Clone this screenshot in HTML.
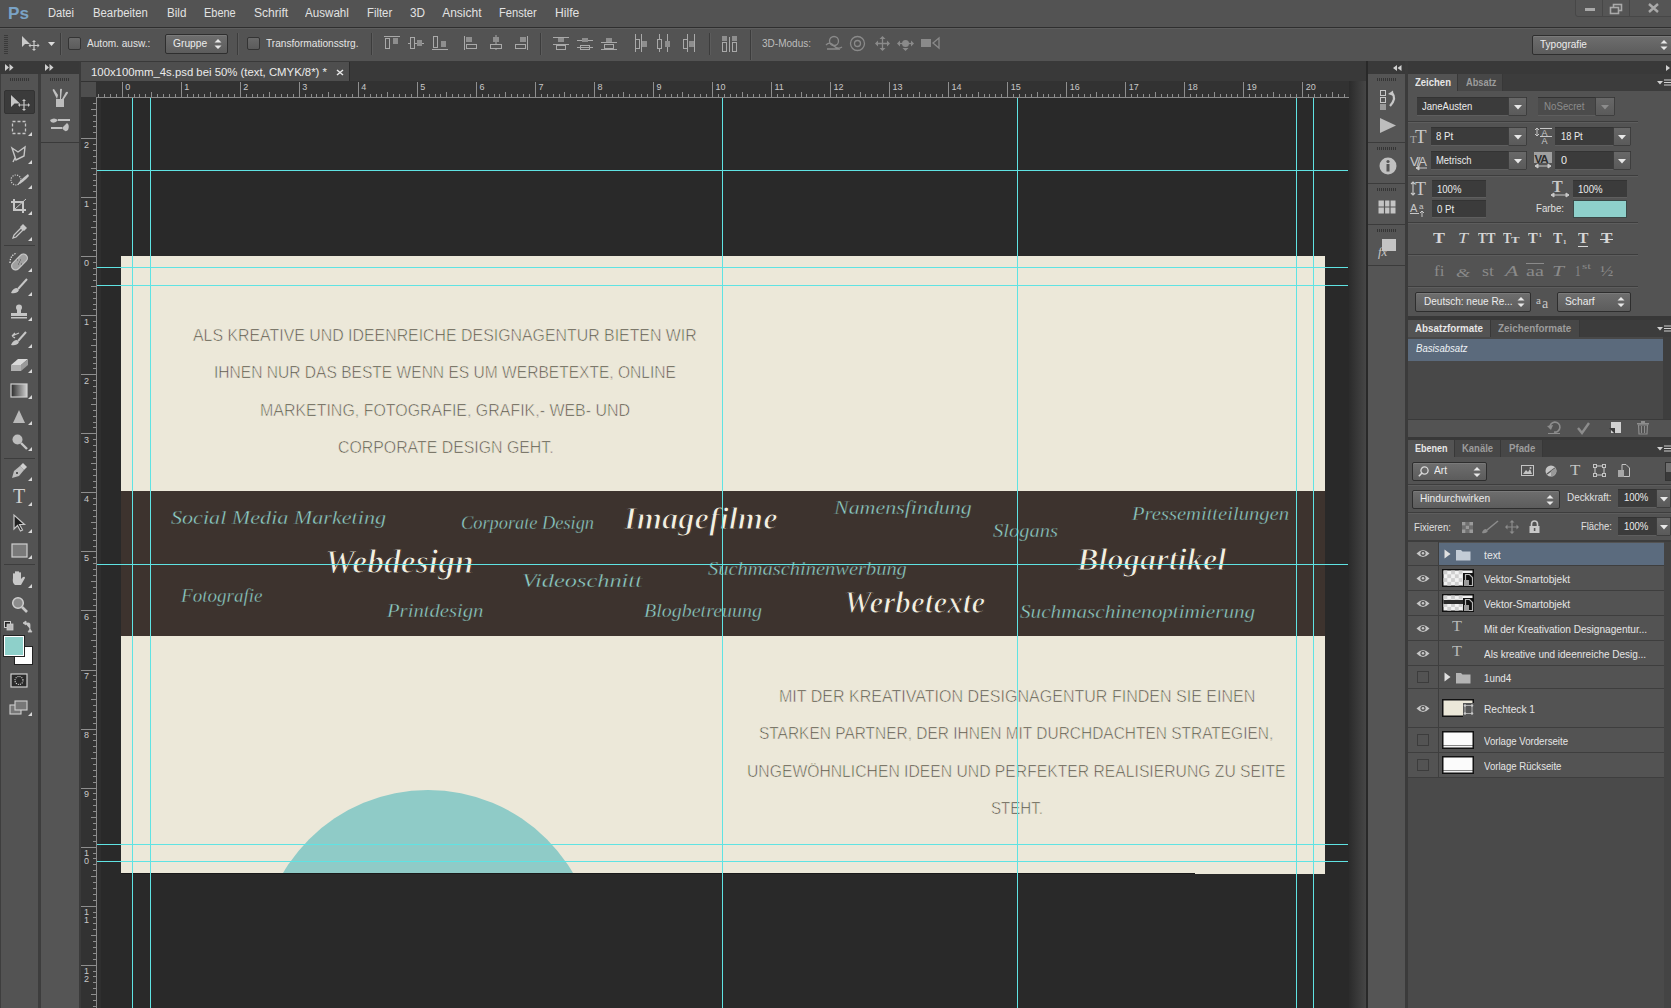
<!DOCTYPE html>
<html><head><meta charset="utf-8"><style>
*{margin:0;padding:0;box-sizing:border-box}
html,body{width:1671px;height:1008px;overflow:hidden;background:#535353;font-family:"Liberation Sans",sans-serif;color:#e0e0e0;position:relative}
.a{position:absolute}
.t{position:absolute;white-space:nowrap}
svg{overflow:visible}
</style></head><body>
<div class="a" style="left:0;top:0;width:1671px;height:27px;background:#535353"></div>
<div class="a" style="left:0;top:27px;width:1671px;height:1px;background:#2f2f2f"></div>
<div class="a" style="left:0;top:28px;width:1671px;height:1px;background:#5e5e5e"></div>
<div class="t" style="left:7.50px;top:4.81px;font:normal bold 17px/17px 'Liberation Sans',sans-serif;color:#7aa3c6;transform:scaleX(1.0096);transform-origin:0 0;">Ps</div>
<div class="t" style="left:47.60px;top:7.04px;font:normal normal 12px/12px 'Liberation Sans',sans-serif;color:#e2e2e2;transform:scaleX(0.9286);transform-origin:0 0;">Datei</div>
<div class="t" style="left:92.50px;top:7.04px;font:normal normal 12px/12px 'Liberation Sans',sans-serif;color:#e2e2e2;transform:scaleX(0.9431);transform-origin:0 0;">Bearbeiten</div>
<div class="t" style="left:167.30px;top:7.04px;font:normal normal 12px/12px 'Liberation Sans',sans-serif;color:#e2e2e2;transform:scaleX(0.9700);transform-origin:0 0;">Bild</div>
<div class="t" style="left:204.30px;top:7.04px;font:normal normal 12px/12px 'Liberation Sans',sans-serif;color:#e2e2e2;transform:scaleX(0.9135);transform-origin:0 0;">Ebene</div>
<div class="t" style="left:254.00px;top:7.04px;font:normal normal 12px/12px 'Liberation Sans',sans-serif;color:#e2e2e2;transform:scaleX(1.0059);transform-origin:0 0;">Schrift</div>
<div class="t" style="left:305.30px;top:7.04px;font:normal normal 12px/12px 'Liberation Sans',sans-serif;color:#e2e2e2;transform:scaleX(0.9670);transform-origin:0 0;">Auswahl</div>
<div class="t" style="left:367.30px;top:7.04px;font:normal normal 12px/12px 'Liberation Sans',sans-serif;color:#e2e2e2;transform:scaleX(0.9438);transform-origin:0 0;">Filter</div>
<div class="t" style="left:410.00px;top:7.04px;font:normal normal 12px/12px 'Liberation Sans',sans-serif;color:#e2e2e2;transform:scaleX(0.9804);transform-origin:0 0;">3D</div>
<div class="t" style="left:442.20px;top:7.04px;font:normal normal 12px/12px 'Liberation Sans',sans-serif;color:#e2e2e2;">Ansicht</div>
<div class="t" style="left:499.20px;top:7.04px;font:normal normal 12px/12px 'Liberation Sans',sans-serif;color:#e2e2e2;transform:scaleX(0.9287);transform-origin:0 0;">Fenster</div>
<div class="t" style="left:555.30px;top:7.04px;font:normal normal 12px/12px 'Liberation Sans',sans-serif;color:#e2e2e2;transform:scaleX(1.0125);transform-origin:0 0;">Hilfe</div>
<div class="a" style="left:1575px;top:-1px;width:97px;height:18px;border:1px solid #474747;border-radius:0 0 0 3px;background:#555"></div>
<div class="a" style="left:1602px;top:0;width:1px;height:17px;background:#474747"></div>
<div class="a" style="left:1629px;top:0;width:1px;height:17px;background:#474747"></div>
<svg class="a" style="left:1580px;top:0px;" width="90" height="17" viewBox="0 0 90 17"><rect x="5" y="8" width="10" height="3" fill="#a9a9a9"/><rect x="33.5" y="4.5" width="8" height="6" fill="none" stroke="#a9a9a9" stroke-width="1.6"/><rect x="30.5" y="7.5" width="8" height="6" fill="#555" stroke="#a9a9a9" stroke-width="1.6"/><path d="M69 4 L78 12 M78 4 L69 12" stroke="#a9a9a9" stroke-width="2.4"/></svg>
<svg class="a" style="left:4px;top:35px;" width="4" height="20" viewBox="0 0 4 20"><rect x="0" y="0" width="4" height="1" fill="#3a3a3a"/><rect x="0" y="2" width="4" height="1" fill="#3a3a3a"/><rect x="0" y="4" width="4" height="1" fill="#3a3a3a"/><rect x="0" y="6" width="4" height="1" fill="#3a3a3a"/><rect x="0" y="8" width="4" height="1" fill="#3a3a3a"/><rect x="0" y="10" width="4" height="1" fill="#3a3a3a"/><rect x="0" y="12" width="4" height="1" fill="#3a3a3a"/><rect x="0" y="14" width="4" height="1" fill="#3a3a3a"/><rect x="0" y="16" width="4" height="1" fill="#3a3a3a"/><rect x="0" y="18" width="4" height="1" fill="#3a3a3a"/></svg>
<svg class="a" style="left:20px;top:35px;" width="22" height="16" viewBox="0 0 22 16"><path d="M2 1 L2 12 L5 9 L10 9Z" fill="#c9c9c9"/><path d="M14 6 V15 M9.5 10.5 H18.5" stroke="#c9c9c9" stroke-width="1.2"/><path d="M14 5 l-2 2 h4z M14 16 l-2 -2 h4z M8.5 10.5 l2 -2 v4z M19.5 10.5 l-2 -2 v4z" fill="#c9c9c9"/></svg>
<svg class="a" style="left:48px;top:42px;" width="7" height="5" viewBox="0 0 7 5"><path d="M0 0 H7 L3.5 4Z" fill="#dcdcdc"/></svg>
<div class="a" style="left:60px;top:33px;width:1px;height:22px;background:#3c3c3c"></div><div class="a" style="left:61px;top:33px;width:1px;height:22px;background:#5c5c5c"></div>
<div class="a" style="left:68px;top:37px;width:13px;height:13px;border:1px solid #343434;border-radius:2px;background:linear-gradient(#6a6a6a,#5b5b5b)"></div>
<div class="t" style="left:86.70px;top:38.19px;font:normal normal 11px/11px 'Liberation Sans',sans-serif;color:#e4e4e4;transform:scaleX(0.9161);transform-origin:0 0;">Autom. ausw.:</div>
<div class="a" style="left:165px;top:34px;width:63px;height:20px;border:1px solid #2e2e2e;border-radius:2px;background:linear-gradient(#6e6e6e,#5c5c5c);box-shadow:inset 0 1px 0 #7a7a7a"></div>
<div class="t" style="left:173.00px;top:37.69px;font:normal normal 11px/11px 'Liberation Sans',sans-serif;color:#ececec;transform:scaleX(0.9319);transform-origin:0 0;">Gruppe</div>
<svg class="a" style="left:214px;top:38.0px;" width="8" height="12" viewBox="0 0 8 12"><path d="M0.5 4.5 L4 1 L7.5 4.5Z M0.5 7.5 L4 11 L7.5 7.5Z" fill="#e8e8e8"/></svg>
<div class="a" style="left:237px;top:33px;width:1px;height:22px;background:#3c3c3c"></div><div class="a" style="left:238px;top:33px;width:1px;height:22px;background:#5c5c5c"></div>
<div class="a" style="left:247px;top:37px;width:13px;height:13px;border:1px solid #343434;border-radius:2px;background:linear-gradient(#6a6a6a,#5b5b5b)"></div>
<div class="t" style="left:266.30px;top:38.19px;font:normal normal 11px/11px 'Liberation Sans',sans-serif;color:#e4e4e4;transform:scaleX(0.9204);transform-origin:0 0;">Transformationsstrg.</div>
<div class="a" style="left:371px;top:33px;width:1px;height:22px;background:#3c3c3c"></div><div class="a" style="left:372px;top:33px;width:1px;height:22px;background:#5c5c5c"></div>
<svg class="a" style="left:384px;top:36px;" width="16" height="14" viewBox="0 0 16 14"><path d="M0 0.5H16" stroke="#a9a9a9"/><rect x="1.5" y="2.5" width="4" height="10" fill="none" stroke="#a9a9a9"/><rect x="9" y="2" width="5" height="6" fill="#8e8e8e"/></svg>
<svg class="a" style="left:408px;top:36px;" width="16" height="14" viewBox="0 0 16 14"><path d="M0 7.5H16" stroke="#a9a9a9"/><rect x="2.5" y="1.5" width="4" height="11" fill="#555" stroke="#a9a9a9"/><rect x="9" y="4" width="5" height="6" fill="#8e8e8e"/></svg>
<svg class="a" style="left:432px;top:36px;" width="16" height="14" viewBox="0 0 16 14"><path d="M0 13.5H16" stroke="#a9a9a9"/><rect x="1.5" y="0.5" width="4" height="11" fill="none" stroke="#a9a9a9"/><rect x="9" y="5" width="5" height="6" fill="#8e8e8e"/></svg>
<svg class="a" style="left:464px;top:36px;" width="15" height="14" viewBox="0 0 15 14"><path d="M0.5 0V14" stroke="#a9a9a9"/><rect x="2" y="1" width="6" height="5" fill="#8e8e8e"/><rect x="2.5" y="8.5" width="10" height="4" fill="none" stroke="#a9a9a9"/></svg>
<svg class="a" style="left:489px;top:35px;" width="14" height="15" viewBox="0 0 14 15"><path d="M7 0V15" stroke="#a9a9a9"/><rect x="4" y="2" width="6" height="5" fill="#8e8e8e"/><rect x="1.5" y="9.5" width="11" height="4" fill="#555" stroke="#a9a9a9"/></svg>
<svg class="a" style="left:513px;top:36px;" width="15" height="14" viewBox="0 0 15 14"><path d="M14.5 0V14" stroke="#a9a9a9"/><rect x="7" y="1" width="6" height="5" fill="#8e8e8e"/><rect x="2.5" y="8.5" width="10" height="4" fill="none" stroke="#a9a9a9"/></svg>
<div class="a" style="left:540px;top:33px;width:1px;height:22px;background:#3c3c3c"></div><div class="a" style="left:541px;top:33px;width:1px;height:22px;background:#5c5c5c"></div>
<svg class="a" style="left:552px;top:36px;" width="18" height="14" viewBox="0 0 18 14"><path d="M1 1.5H17 M1 8.5H17" stroke="#a9a9a9"/><rect x="6" y="2" width="6" height="4" fill="#8e8e8e"/><rect x="4.5" y="9.5" width="9" height="4" fill="none" stroke="#a9a9a9"/></svg>
<svg class="a" style="left:576px;top:36px;" width="18" height="14" viewBox="0 0 18 14"><path d="M1 4.5H17 M1 11.5H17" stroke="#a9a9a9"/><rect x="6" y="2" width="6" height="4" fill="#8e8e8e"/><rect x="4.5" y="9.5" width="9" height="4" fill="none" stroke="#a9a9a9"/></svg>
<svg class="a" style="left:600px;top:36px;" width="18" height="14" viewBox="0 0 18 14"><path d="M1 6.5H17 M1 13.5H17" stroke="#a9a9a9"/><rect x="6" y="2" width="6" height="4" fill="#8e8e8e"/><rect x="4.5" y="8.5" width="9" height="4" fill="none" stroke="#a9a9a9"/></svg>
<svg class="a" style="left:634px;top:33px;" width="14" height="20" viewBox="0 0 14 20"><path d="M1.5 1V19 M7.5 1V19" stroke="#a9a9a9"/><rect x="1.5" y="6.5" width="4" height="9" fill="none" stroke="#a9a9a9"/><rect x="8" y="8" width="5" height="6" fill="#8e8e8e"/></svg>
<svg class="a" style="left:656px;top:33px;" width="15" height="20" viewBox="0 0 15 20"><path d="M3.5 1V19 M11.5 1V19" stroke="#a9a9a9"/><rect x="1.5" y="6.5" width="4" height="9" fill="#555" stroke="#a9a9a9"/><rect x="9" y="8" width="5" height="6" fill="#8e8e8e"/></svg>
<svg class="a" style="left:682px;top:33px;" width="14" height="20" viewBox="0 0 14 20"><path d="M5.5 1V19 M12.5 1V19" stroke="#a9a9a9"/><rect x="1.5" y="6.5" width="4" height="9" fill="none" stroke="#a9a9a9"/><rect x="7" y="8" width="5" height="6" fill="#8e8e8e"/></svg>
<div class="a" style="left:709px;top:33px;width:1px;height:22px;background:#3c3c3c"></div><div class="a" style="left:710px;top:33px;width:1px;height:22px;background:#5c5c5c"></div>
<svg class="a" style="left:721px;top:35px;" width="17" height="18" viewBox="0 0 17 18"><rect x="1" y="1" width="5" height="5" fill="#8e8e8e"/><rect x="11" y="1" width="5" height="5" fill="#8e8e8e"/><rect x="1.5" y="7.5" width="4" height="9" fill="none" stroke="#a9a9a9"/><rect x="11.5" y="7.5" width="4" height="9" fill="none" stroke="#a9a9a9"/><path d="M8.5 2V17" stroke="#a9a9a9"/></svg>
<div class="a" style="left:750px;top:30px;width:1px;height:30px;background:#3c3c3c"></div><div class="a" style="left:751px;top:30px;width:1px;height:30px;background:#5c5c5c"></div>
<div class="t" style="left:761.80px;top:38.19px;font:normal normal 11px/11px 'Liberation Sans',sans-serif;color:#bdbdbd;transform:scaleX(0.9108);transform-origin:0 0;">3D-Modus:</div>
<svg class="a" style="left:824px;top:35px;" width="19" height="17" viewBox="0 0 19 17"><circle cx="10" cy="6" r="4.5" fill="none" stroke="#8a8a8a" stroke-width="1.3"/><path d="M2 10 Q6 6 10 11 Q14 15 18 12 M3 14 H16" fill="none" stroke="#8a8a8a" stroke-width="1.3"/></svg>
<svg class="a" style="left:849px;top:35px;" width="17" height="17" viewBox="0 0 17 17"><circle cx="8.5" cy="8.5" r="7" fill="none" stroke="#8a8a8a" stroke-width="1.3"/><circle cx="8.5" cy="8.5" r="3" fill="none" stroke="#8a8a8a" stroke-width="1.3"/></svg>
<svg class="a" style="left:874px;top:35px;" width="17" height="17" viewBox="0 0 17 17"><path d="M8.5 1 L5.5 4 H11.5Z M8.5 16 L5.5 13 H11.5Z M1 8.5 L4 5.5 V11.5Z M16 8.5 L13 5.5 V11.5Z" fill="#8a8a8a"/><path d="M8.5 3V14 M3 8.5H14" stroke="#8a8a8a" stroke-width="1.3"/></svg>
<svg class="a" style="left:896px;top:35px;" width="19" height="17" viewBox="0 0 19 17"><circle cx="9.5" cy="8.5" r="3.5" fill="#8a8a8a"/><path d="M1 8.5 L4 5.5 V11.5Z M18 8.5 L15 5.5 V11.5Z M9.5 16 L6.5 13 H12.5Z" fill="#8a8a8a"/><path d="M3 8.5H16" stroke="#8a8a8a" stroke-width="1.3"/></svg>
<svg class="a" style="left:920px;top:37px;" width="21" height="12" viewBox="0 0 21 12"><rect x="1" y="2" width="10" height="8" fill="#8a8a8a"/><path d="M19 1 L13 6 L19 11Z" fill="none" stroke="#8a8a8a" stroke-width="1.3"/></svg>
<div class="a" style="left:1532px;top:35px;width:142px;height:20px;border:1px solid #2e2e2e;border-radius:2px;background:linear-gradient(#6e6e6e,#5c5c5c);box-shadow:inset 0 1px 0 #7a7a7a"></div>
<div class="t" style="left:1540.00px;top:38.69px;font:normal normal 11px/11px 'Liberation Sans',sans-serif;color:#ececec;transform:scaleX(0.9144);transform-origin:0 0;">Typografie</div>
<svg class="a" style="left:1660px;top:39.0px;" width="8" height="12" viewBox="0 0 8 12"><path d="M0.5 4.5 L4 1 L7.5 4.5Z M0.5 7.5 L4 11 L7.5 7.5Z" fill="#e8e8e8"/></svg>
<div class="a" style="left:0;top:61px;width:81px;height:13px;background:#393939"></div>
<svg class="a" style="left:5px;top:64px;" width="9" height="7" viewBox="0 0 9 7"><path d="M0 0 L4 3.5 L0 7Z M4.5 0 L8.5 3.5 L4.5 7Z" fill="#d0d0d0"/></svg>
<svg class="a" style="left:45px;top:64px;" width="9" height="7" viewBox="0 0 9 7"><path d="M0 0 L4 3.5 L0 7Z M4.5 0 L8.5 3.5 L4.5 7Z" fill="#d0d0d0"/></svg>
<div class="a" style="left:0;top:74px;width:1px;height:934px;background:#3e3e3e"></div>
<div class="a" style="left:1px;top:74px;width:37px;height:934px;background:#535353"></div>
<div class="a" style="left:38px;top:74px;width:3px;height:934px;background:#3d3d3d"></div>
<div class="a" style="left:41px;top:74px;width:38px;height:934px;background:#555555"></div>
<div class="a" style="left:41px;top:142px;width:38px;height:1px;background:#3a3a3a"></div>
<div class="a" style="left:79px;top:61px;width:2px;height:947px;background:#3a3a3a"></div>
<svg class="a" style="left:10px;top:78px;" width="20" height="3" viewBox="0 0 20 3"><rect x="0" y="0" width="1" height="3" fill="#353535"/><rect x="2" y="0" width="1" height="3" fill="#353535"/><rect x="4" y="0" width="1" height="3" fill="#353535"/><rect x="6" y="0" width="1" height="3" fill="#353535"/><rect x="8" y="0" width="1" height="3" fill="#353535"/><rect x="10" y="0" width="1" height="3" fill="#353535"/><rect x="12" y="0" width="1" height="3" fill="#353535"/><rect x="14" y="0" width="1" height="3" fill="#353535"/><rect x="16" y="0" width="1" height="3" fill="#353535"/><rect x="18" y="0" width="1" height="3" fill="#353535"/></svg>
<svg class="a" style="left:50px;top:78px;" width="20" height="3" viewBox="0 0 20 3"><rect x="0" y="0" width="1" height="3" fill="#353535"/><rect x="2" y="0" width="1" height="3" fill="#353535"/><rect x="4" y="0" width="1" height="3" fill="#353535"/><rect x="6" y="0" width="1" height="3" fill="#353535"/><rect x="8" y="0" width="1" height="3" fill="#353535"/><rect x="10" y="0" width="1" height="3" fill="#353535"/><rect x="12" y="0" width="1" height="3" fill="#353535"/><rect x="14" y="0" width="1" height="3" fill="#353535"/><rect x="16" y="0" width="1" height="3" fill="#353535"/><rect x="18" y="0" width="1" height="3" fill="#353535"/></svg>
<div class="a" style="left:4px;top:90px;width:31px;height:24px;background:#3b3b3b;border:1px solid #333;border-radius:2px"></div>
<svg class="a" style="left:10px;top:94px;" width="22" height="16" viewBox="0 0 22 16"><path d="M1 1 L1 13 L4.5 9.5 L10 9.5Z" fill="#c6c6c6"/><path d="M14 6 V16 M9 11 H19" stroke="#c6c6c6" stroke-width="1.2"/><path d="M14 5 l-2 2 h4z M14 17 l-2 -2 h4z M8 11 l2 -2 v4z M20 11 l-2 -2 v4z" fill="#c6c6c6"/></svg>
<svg class="a" style="left:11px;top:120px;" width="16" height="15" viewBox="0 0 16 15"><rect x="1.5" y="1.5" width="13" height="12" fill="none" stroke="#c6c6c6" stroke-width="1.3" stroke-dasharray="3 2"/></svg>
<svg class="a" style="left:28px;top:132px;" width="4" height="4" viewBox="0 0 4 4"><path d="M4 0 V4 H0Z" fill="#d8d8d8"/></svg>
<svg class="a" style="left:10px;top:145px;" width="18" height="18" viewBox="0 0 18 18"><path d="M2 3 L8 7 L15 2 L14 11 L6 15 L2 3Z M5 13 L3 17" fill="none" stroke="#c6c6c6" stroke-width="1.4"/></svg>
<svg class="a" style="left:28px;top:160px;" width="4" height="4" viewBox="0 0 4 4"><path d="M4 0 V4 H0Z" fill="#d8d8d8"/></svg>
<svg class="a" style="left:10px;top:172px;" width="20" height="16" viewBox="0 0 20 16"><circle cx="6" cy="8" r="5" fill="none" stroke="#c6c6c6" stroke-width="1.2" stroke-dasharray="1.2 1.2"/><path d="M7 13 Q10 8 18 2 L19 4 Q13 11 7 13Z" fill="#c6c6c6"/></svg>
<svg class="a" style="left:28px;top:185px;" width="4" height="4" viewBox="0 0 4 4"><path d="M4 0 V4 H0Z" fill="#d8d8d8"/></svg>
<svg class="a" style="left:10px;top:198px;" width="18" height="16" viewBox="0 0 18 16"><path d="M4 1 V12 H16 M1 4 H13 V15" fill="none" stroke="#c6c6c6" stroke-width="2"/><path d="M5 11 L16 1" stroke="#c6c6c6" stroke-width="1"/></svg>
<svg class="a" style="left:28px;top:211px;" width="4" height="4" viewBox="0 0 4 4"><path d="M4 0 V4 H0Z" fill="#d8d8d8"/></svg>
<svg class="a" style="left:11px;top:223px;" width="17" height="17" viewBox="0 0 17 17"><path d="M2 15 L3 12 L10 5 L12 7 L5 14Z" fill="none" stroke="#c6c6c6" stroke-width="1.3"/><path d="M9 4 L13 8 L16 5 L12 1Z" fill="#c6c6c6"/></svg>
<svg class="a" style="left:28px;top:237px;" width="4" height="4" viewBox="0 0 4 4"><path d="M4 0 V4 H0Z" fill="#d8d8d8"/></svg>
<div class="a" style="left:4px;top:245px;width:31px;height:1px;background:#3d3d3d"></div>
<svg class="a" style="left:8px;top:252px;" width="21" height="19" viewBox="0 0 21 19"><rect x="2" y="6" width="19" height="8" rx="4" transform="rotate(-45 11.5 10)" fill="#a0a0a0" stroke="#c6c6c6" stroke-width="1.2"/><path d="M9 8h1M11 10h1M13 12h1M12 8h1M10 12h1" stroke="#555" stroke-width="1"/><path d="M2 11 Q2 3 9 1" fill="none" stroke="#e0e0e0" stroke-width="1.3" stroke-dasharray="1.3 1.3"/></svg>
<svg class="a" style="left:28px;top:268px;" width="4" height="4" viewBox="0 0 4 4"><path d="M4 0 V4 H0Z" fill="#d8d8d8"/></svg>
<svg class="a" style="left:9px;top:278px;" width="20" height="17" viewBox="0 0 20 17"><path d="M2 15 Q4 10 8 10 L10 12 Q8 16 2 15Z" fill="#c6c6c6"/><path d="M9 11 L18 1" stroke="#c6c6c6" stroke-width="2"/></svg>
<svg class="a" style="left:28px;top:292px;" width="4" height="4" viewBox="0 0 4 4"><path d="M4 0 V4 H0Z" fill="#d8d8d8"/></svg>
<svg class="a" style="left:10px;top:304px;" width="18" height="16" viewBox="0 0 18 16"><circle cx="9" cy="3.5" r="3" fill="#c6c6c6"/><rect x="7" y="5" width="4" height="4" fill="#c6c6c6"/><rect x="1" y="9" width="16" height="3" fill="#c6c6c6"/><rect x="1" y="13" width="16" height="1.5" fill="#c6c6c6"/></svg>
<svg class="a" style="left:28px;top:317px;" width="4" height="4" viewBox="0 0 4 4"><path d="M4 0 V4 H0Z" fill="#d8d8d8"/></svg>
<svg class="a" style="left:9px;top:330px;" width="20" height="17" viewBox="0 0 20 17"><path d="M2 15 Q4 10 8 10 L10 12 Q8 16 2 15Z" fill="#c6c6c6"/><path d="M9 11 L17 2" stroke="#c6c6c6" stroke-width="2"/><path d="M3 6 L10 3 M3 6 L6 3 M3 6 L6 8" stroke="#c6c6c6" stroke-width="1.3" fill="none"/></svg>
<svg class="a" style="left:28px;top:344px;" width="4" height="4" viewBox="0 0 4 4"><path d="M4 0 V4 H0Z" fill="#d8d8d8"/></svg>
<svg class="a" style="left:10px;top:357px;" width="19" height="15" viewBox="0 0 19 15"><path d="M1 8 L8 2 H18 L11 8Z" fill="#dadada"/><path d="M1 8 H11 V14 H1Z" fill="#b0b0b0"/><path d="M11 8 L18 2 V8 L11 14Z" fill="#9a9a9a"/></svg>
<svg class="a" style="left:28px;top:369px;" width="4" height="4" viewBox="0 0 4 4"><path d="M4 0 V4 H0Z" fill="#d8d8d8"/></svg>
<svg class="a" style="left:10px;top:383px;" width="18" height="15" viewBox="0 0 18 15"><defs><linearGradient id="gg" x1="0" x2="1"><stop offset="0" stop-color="#2a2a2a"/><stop offset="1" stop-color="#d0d0d0"/></linearGradient></defs><rect x="1" y="1" width="16" height="13" fill="url(#gg)" stroke="#cfcfcf" stroke-width="1.2"/></svg>
<svg class="a" style="left:28px;top:395px;" width="4" height="4" viewBox="0 0 4 4"><path d="M4 0 V4 H0Z" fill="#d8d8d8"/></svg>
<svg class="a" style="left:12px;top:409px;" width="14" height="15" viewBox="0 0 14 15"><path d="M7 1 L13 14 H1Z" fill="#b9b9b9"/></svg>
<svg class="a" style="left:28px;top:421px;" width="4" height="4" viewBox="0 0 4 4"><path d="M4 0 V4 H0Z" fill="#d8d8d8"/></svg>
<svg class="a" style="left:11px;top:433px;" width="17" height="17" viewBox="0 0 17 17"><circle cx="6.5" cy="6.5" r="5" fill="#bdbdbd"/><path d="M10 10 L16 16" stroke="#c6c6c6" stroke-width="2.4"/></svg>
<svg class="a" style="left:28px;top:447px;" width="4" height="4" viewBox="0 0 4 4"><path d="M4 0 V4 H0Z" fill="#d8d8d8"/></svg>
<div class="a" style="left:4px;top:458px;width:31px;height:1px;background:#3d3d3d"></div>
<svg class="a" style="left:10px;top:462px;" width="18" height="18" viewBox="0 0 18 18"><path d="M2 16 L4 9 L10 4 L14 8 L9 14Z" fill="#bdbdbd"/><path d="M10 4 L13 1 L17 5 L14 8" fill="#cfcfcf"/><circle cx="7" cy="11" r="1" fill="#333"/></svg>
<svg class="a" style="left:28px;top:477px;" width="4" height="4" viewBox="0 0 4 4"><path d="M4 0 V4 H0Z" fill="#d8d8d8"/></svg>
<svg class="a" style="left:11px;top:488px;" width="16" height="17" viewBox="0 0 16 17"><text x="8" y="15" font-family="Liberation Serif" font-size="20" text-anchor="middle" fill="#cfcfcf">T</text></svg>
<svg class="a" style="left:28px;top:502px;" width="4" height="4" viewBox="0 0 4 4"><path d="M4 0 V4 H0Z" fill="#d8d8d8"/></svg>
<svg class="a" style="left:13px;top:514px;" width="14" height="18" viewBox="0 0 14 18"><path d="M1 1 L1 15 L4.5 11.5 L7.5 17 L9.5 16 L6.5 10.5 L11.5 10.5Z" fill="#1f1f1f" stroke="#c6c6c6" stroke-width="1.2"/></svg>
<svg class="a" style="left:28px;top:529px;" width="4" height="4" viewBox="0 0 4 4"><path d="M4 0 V4 H0Z" fill="#d8d8d8"/></svg>
<svg class="a" style="left:11px;top:543px;" width="17" height="15" viewBox="0 0 17 15"><rect x="1" y="1" width="15" height="13" fill="#7a7a7a" stroke="#cfcfcf" stroke-width="1.2"/></svg>
<svg class="a" style="left:28px;top:555px;" width="4" height="4" viewBox="0 0 4 4"><path d="M4 0 V4 H0Z" fill="#d8d8d8"/></svg>
<div class="a" style="left:4px;top:564px;width:31px;height:1px;background:#3d3d3d"></div>
<svg class="a" style="left:10px;top:570px;" width="19" height="17" viewBox="0 0 19 17"><path d="M3 8 V4 Q4 2 5 4 V8 V2 Q6 0 7 2 V8 V2 Q8 0 9 2 V8 V3 Q10 1 11 3 V9 L13 7 Q15 6 15 8 L11 15 H5 Q2 13 3 8Z" fill="#c8c8c8"/></svg>
<svg class="a" style="left:28px;top:584px;" width="4" height="4" viewBox="0 0 4 4"><path d="M4 0 V4 H0Z" fill="#d8d8d8"/></svg>
<svg class="a" style="left:11px;top:596px;" width="18" height="17" viewBox="0 0 18 17"><circle cx="7" cy="7" r="5.3" fill="#8c8c8c" stroke="#cfcfcf" stroke-width="1.5"/><path d="M11 11 L16 16" stroke="#c6c6c6" stroke-width="2.6"/></svg>
<svg class="a" style="left:3px;top:620px;" width="30" height="12" viewBox="0 0 30 12"><rect x="1.5" y="1.5" width="6" height="6" fill="#222" stroke="#ccc"/><rect x="4" y="4" width="6" height="6" fill="#bbb" stroke="#ccc" stroke-width="0.8"/><path d="M20 3 L23 1 V5Z M27 9 L25 12 H29Z M22 3 H26 Q27 3 27 5 V9" fill="#c8c8c8" stroke="#c8c8c8" stroke-width="0.8"/></svg>
<div class="a" style="left:14px;top:646px;width:19px;height:19px;background:#fff;border:1px solid #222"></div>
<div class="a" style="left:4px;top:636px;width:20px;height:20px;background:#8ed0ca;border:1px solid #fff;outline:1px solid #222"></div>
<svg class="a" style="left:10px;top:673px;" width="18" height="15" viewBox="0 0 18 15"><rect x="1" y="1" width="16" height="13" fill="#2a2a2a" stroke="#cfcfcf" stroke-width="1.2"/><circle cx="9" cy="7.5" r="4" fill="none" stroke="#ddd" stroke-width="1.1" stroke-dasharray="1 1.1"/></svg>
<svg class="a" style="left:9px;top:700px;" width="19" height="15" viewBox="0 0 19 15"><rect x="1" y="5" width="11" height="9" fill="#777" stroke="#cfcfcf" stroke-width="1.1"/><rect x="6" y="1" width="12" height="9" fill="#777" stroke="#cfcfcf" stroke-width="1.1"/></svg>
<svg class="a" style="left:28px;top:712px;" width="4" height="4" viewBox="0 0 4 4"><path d="M4 0 V4 H0Z" fill="#d8d8d8"/></svg>
<svg class="a" style="left:50px;top:88px;" width="20" height="20" viewBox="0 0 20 20"><rect x="6" y="11" width="8" height="8" fill="#bdbdbd"/><path d="M7 11 L3 3 Q2 1 4 1 L8 7Z M10 11 V2 Q10 0 12 1 L11 11Z M12 11 L16 4 Q18 3 18 5 L14 11Z" fill="#c0c0c0"/></svg>
<svg class="a" style="left:49px;top:116px;" width="22" height="18" viewBox="0 0 22 18"><path d="M1 4 Q5 1 9 4 Q6 8 2 6Z" fill="#c0c0c0"/><rect x="9" y="3" width="12" height="2" fill="#c0c0c0"/><rect x="2" y="11" width="11" height="2" fill="#c0c0c0"/><path d="M13 12 L18 7 Q21 9 19 14 Q16 17 13 12Z" fill="#c0c0c0"/></svg>
<div class="a" style="left:81px;top:61px;width:1285px;height:20px;background:#393939"></div>
<div class="a" style="left:81px;top:62px;width:269px;height:19px;background:#4e4e4e;border-right:1px solid #2c2c2c"></div>
<div class="t" style="left:90.50px;top:67.27px;font:normal normal 11.5px/11.5px 'Liberation Sans',sans-serif;color:#ebebeb;transform:scaleX(0.9870);transform-origin:0 0;">100x100mm_4s.psd bei 50% (text, CMYK/8*) *</div>
<svg class="a" style="left:336px;top:69px;" width="8" height="7" viewBox="0 0 8 7"><path d="M1 1 L7 6 M7 1 L1 6" stroke="#e8e8e8" stroke-width="1.5"/></svg>
<div class="a" style="left:81px;top:81px;width:1270px;height:16px;background:#323232"></div>
<div class="a" style="left:81px;top:82px;width:15px;height:15px;background:#4e4e4e"></div>
<svg class="a" style="left:81px;top:81px;" width="1270" height="16" viewBox="0 0 1270 16"><path d="M17.5 13V17 M23.5 13V17 M29.5 13V17 M35.5 13V17 M41.5 1V17 M47.5 13V17 M53.5 13V17 M58.5 13V17 M64.5 13V17 M70.5 11V17 M76.5 13V17 M82.5 13V17 M88.5 13V17 M94.5 13V17 M100.5 1V17 M106.5 13V17 M112.5 13V17 M117.5 13V17 M123.5 13V17 M129.5 11V17 M135.5 13V17 M141.5 13V17 M147.5 13V17 M153.5 13V17 M159.5 1V17 M165.5 13V17 M171.5 13V17 M176.5 13V17 M182.5 13V17 M188.5 11V17 M194.5 13V17 M200.5 13V17 M206.5 13V17 M212.5 13V17 M218.5 1V17 M224.5 13V17 M230.5 13V17 M235.5 13V17 M241.5 13V17 M247.5 11V17 M253.5 13V17 M259.5 13V17 M265.5 13V17 M271.5 13V17 M277.5 1V17 M283.5 13V17 M289.5 13V17 M295.5 13V17 M300.5 13V17 M306.5 11V17 M312.5 13V17 M318.5 13V17 M324.5 13V17 M330.5 13V17 M336.5 1V17 M342.5 13V17 M348.5 13V17 M354.5 13V17 M359.5 13V17 M365.5 11V17 M371.5 13V17 M377.5 13V17 M383.5 13V17 M389.5 13V17 M395.5 1V17 M401.5 13V17 M407.5 13V17 M413.5 13V17 M418.5 13V17 M424.5 11V17 M430.5 13V17 M436.5 13V17 M442.5 13V17 M448.5 13V17 M454.5 1V17 M460.5 13V17 M466.5 13V17 M472.5 13V17 M478.5 13V17 M483.5 11V17 M489.5 13V17 M495.5 13V17 M501.5 13V17 M507.5 13V17 M513.5 1V17 M519.5 13V17 M525.5 13V17 M531.5 13V17 M537.5 13V17 M542.5 11V17 M548.5 13V17 M554.5 13V17 M560.5 13V17 M566.5 13V17 M572.5 1V17 M578.5 13V17 M584.5 13V17 M590.5 13V17 M596.5 13V17 M601.5 11V17 M607.5 13V17 M613.5 13V17 M619.5 13V17 M625.5 13V17 M631.5 1V17 M637.5 13V17 M643.5 13V17 M649.5 13V17 M655.5 13V17 M661.5 11V17 M666.5 13V17 M672.5 13V17 M678.5 13V17 M684.5 13V17 M690.5 1V17 M696.5 13V17 M702.5 13V17 M708.5 13V17 M714.5 13V17 M720.5 11V17 M725.5 13V17 M731.5 13V17 M737.5 13V17 M743.5 13V17 M749.5 1V17 M755.5 13V17 M761.5 13V17 M767.5 13V17 M773.5 13V17 M779.5 11V17 M784.5 13V17 M790.5 13V17 M796.5 13V17 M802.5 13V17 M808.5 1V17 M814.5 13V17 M820.5 13V17 M826.5 13V17 M832.5 13V17 M838.5 11V17 M844.5 13V17 M849.5 13V17 M855.5 13V17 M861.5 13V17 M867.5 1V17 M873.5 13V17 M879.5 13V17 M885.5 13V17 M891.5 13V17 M897.5 11V17 M903.5 13V17 M908.5 13V17 M914.5 13V17 M920.5 13V17 M926.5 1V17 M932.5 13V17 M938.5 13V17 M944.5 13V17 M950.5 13V17 M956.5 11V17 M962.5 13V17 M967.5 13V17 M973.5 13V17 M979.5 13V17 M985.5 1V17 M991.5 13V17 M997.5 13V17 M1003.5 13V17 M1009.5 13V17 M1015.5 11V17 M1021.5 13V17 M1027.5 13V17 M1032.5 13V17 M1038.5 13V17 M1044.5 1V17 M1050.5 13V17 M1056.5 13V17 M1062.5 13V17 M1068.5 13V17 M1074.5 11V17 M1080.5 13V17 M1086.5 13V17 M1091.5 13V17 M1097.5 13V17 M1103.5 1V17 M1109.5 13V17 M1115.5 13V17 M1121.5 13V17 M1127.5 13V17 M1133.5 11V17 M1139.5 13V17 M1145.5 13V17 M1150.5 13V17 M1156.5 13V17 M1162.5 1V17 M1168.5 13V17 M1174.5 13V17 M1180.5 13V17 M1186.5 13V17 M1192.5 11V17 M1198.5 13V17 M1204.5 13V17 M1209.5 13V17 M1215.5 13V17 M1221.5 1V17 M1227.5 13V17 M1233.5 13V17 M1239.5 13V17 M1245.5 13V17 M1251.5 11V17 M1257.5 13V17 M1263.5 13V17 M1269.5 13V17" stroke="#8e8e8e" stroke-width="1"/><rect x="16" y="16" width="1254" height="1" fill="#8a8a8a"/></svg>
<div class="t" style="left:125.2px;top:82.5px;font:9px/9px 'Liberation Sans',sans-serif;color:#c8c8c8">0</div>
<div class="t" style="left:184.2px;top:82.5px;font:9px/9px 'Liberation Sans',sans-serif;color:#c8c8c8">1</div>
<div class="t" style="left:243.3px;top:82.5px;font:9px/9px 'Liberation Sans',sans-serif;color:#c8c8c8">2</div>
<div class="t" style="left:302.3px;top:82.5px;font:9px/9px 'Liberation Sans',sans-serif;color:#c8c8c8">3</div>
<div class="t" style="left:361.3px;top:82.5px;font:9px/9px 'Liberation Sans',sans-serif;color:#c8c8c8">4</div>
<div class="t" style="left:420.3px;top:82.5px;font:9px/9px 'Liberation Sans',sans-serif;color:#c8c8c8">5</div>
<div class="t" style="left:479.4px;top:82.5px;font:9px/9px 'Liberation Sans',sans-serif;color:#c8c8c8">6</div>
<div class="t" style="left:538.4px;top:82.5px;font:9px/9px 'Liberation Sans',sans-serif;color:#c8c8c8">7</div>
<div class="t" style="left:597.4px;top:82.5px;font:9px/9px 'Liberation Sans',sans-serif;color:#c8c8c8">8</div>
<div class="t" style="left:656.5px;top:82.5px;font:9px/9px 'Liberation Sans',sans-serif;color:#c8c8c8">9</div>
<div class="t" style="left:715.5px;top:82.5px;font:9px/9px 'Liberation Sans',sans-serif;color:#c8c8c8">10</div>
<div class="t" style="left:774.5px;top:82.5px;font:9px/9px 'Liberation Sans',sans-serif;color:#c8c8c8">11</div>
<div class="t" style="left:833.6px;top:82.5px;font:9px/9px 'Liberation Sans',sans-serif;color:#c8c8c8">12</div>
<div class="t" style="left:892.6px;top:82.5px;font:9px/9px 'Liberation Sans',sans-serif;color:#c8c8c8">13</div>
<div class="t" style="left:951.6px;top:82.5px;font:9px/9px 'Liberation Sans',sans-serif;color:#c8c8c8">14</div>
<div class="t" style="left:1010.7px;top:82.5px;font:9px/9px 'Liberation Sans',sans-serif;color:#c8c8c8">15</div>
<div class="t" style="left:1069.7px;top:82.5px;font:9px/9px 'Liberation Sans',sans-serif;color:#c8c8c8">16</div>
<div class="t" style="left:1128.7px;top:82.5px;font:9px/9px 'Liberation Sans',sans-serif;color:#c8c8c8">17</div>
<div class="t" style="left:1187.7px;top:82.5px;font:9px/9px 'Liberation Sans',sans-serif;color:#c8c8c8">18</div>
<div class="t" style="left:1246.8px;top:82.5px;font:9px/9px 'Liberation Sans',sans-serif;color:#c8c8c8">19</div>
<div class="t" style="left:1305.8px;top:82.5px;font:9px/9px 'Liberation Sans',sans-serif;color:#c8c8c8">20</div>
<div class="a" style="left:81px;top:97px;width:16px;height:911px;background:#323232"></div>
<svg class="a" style="left:81px;top:97px;" width="16" height="911" viewBox="0 0 16 911"><path d="M12 6.5H16 M10 12.5H16 M12 18.5H16 M12 24.5H16 M12 29.5H16 M12 35.5H16 M0 41.5H16 M12 47.5H16 M12 53.5H16 M12 59.5H16 M12 65.5H16 M10 71.5H16 M12 77.5H16 M12 83.5H16 M12 88.5H16 M12 94.5H16 M0 100.5H16 M12 106.5H16 M12 112.5H16 M12 118.5H16 M12 124.5H16 M10 130.5H16 M12 136.5H16 M12 142.5H16 M12 147.5H16 M12 153.5H16 M0 159.5H16 M12 165.5H16 M12 171.5H16 M12 177.5H16 M12 183.5H16 M10 189.5H16 M12 195.5H16 M12 201.5H16 M12 207.5H16 M12 212.5H16 M0 218.5H16 M12 224.5H16 M12 230.5H16 M12 236.5H16 M12 242.5H16 M10 248.5H16 M12 254.5H16 M12 260.5H16 M12 266.5H16 M12 271.5H16 M0 277.5H16 M12 283.5H16 M12 289.5H16 M12 295.5H16 M12 301.5H16 M10 307.5H16 M12 313.5H16 M12 319.5H16 M12 325.5H16 M12 330.5H16 M0 336.5H16 M12 342.5H16 M12 348.5H16 M12 354.5H16 M12 360.5H16 M10 366.5H16 M12 372.5H16 M12 378.5H16 M12 384.5H16 M12 390.5H16 M0 395.5H16 M12 401.5H16 M12 407.5H16 M12 413.5H16 M12 419.5H16 M10 425.5H16 M12 431.5H16 M12 437.5H16 M12 443.5H16 M12 449.5H16 M0 454.5H16 M12 460.5H16 M12 466.5H16 M12 472.5H16 M12 478.5H16 M10 484.5H16 M12 490.5H16 M12 496.5H16 M12 502.5H16 M12 508.5H16 M0 513.5H16 M12 519.5H16 M12 525.5H16 M12 531.5H16 M12 537.5H16 M10 543.5H16 M12 549.5H16 M12 555.5H16 M12 561.5H16 M12 567.5H16 M0 573.5H16 M12 578.5H16 M12 584.5H16 M12 590.5H16 M12 596.5H16 M10 602.5H16 M12 608.5H16 M12 614.5H16 M12 620.5H16 M12 626.5H16 M0 632.5H16 M12 637.5H16 M12 643.5H16 M12 649.5H16 M12 655.5H16 M10 661.5H16 M12 667.5H16 M12 673.5H16 M12 679.5H16 M12 685.5H16 M0 691.5H16 M12 696.5H16 M12 702.5H16 M12 708.5H16 M12 714.5H16 M10 720.5H16 M12 726.5H16 M12 732.5H16 M12 738.5H16 M12 744.5H16 M0 750.5H16 M12 756.5H16 M12 761.5H16 M12 767.5H16 M12 773.5H16 M10 779.5H16 M12 785.5H16 M12 791.5H16 M12 797.5H16 M12 803.5H16 M0 809.5H16 M12 815.5H16 M12 820.5H16 M12 826.5H16 M12 832.5H16 M10 838.5H16 M12 844.5H16 M12 850.5H16 M12 856.5H16 M12 862.5H16 M0 868.5H16 M12 874.5H16 M12 879.5H16 M12 885.5H16 M12 891.5H16 M10 897.5H16 M12 903.5H16 M12 909.5H16" stroke="#8e8e8e" stroke-width="1"/><rect x="15" y="0" width="1" height="911" fill="#8a8a8a"/></svg>
<div class="t" style="left:84px;top:140.7px;font:9px/9px 'Liberation Sans',sans-serif;color:#c8c8c8">2</div>
<div class="t" style="left:84px;top:199.8px;font:9px/9px 'Liberation Sans',sans-serif;color:#c8c8c8">1</div>
<div class="t" style="left:84px;top:258.8px;font:9px/9px 'Liberation Sans',sans-serif;color:#c8c8c8">0</div>
<div class="t" style="left:84px;top:317.8px;font:9px/9px 'Liberation Sans',sans-serif;color:#c8c8c8">1</div>
<div class="t" style="left:84px;top:376.9px;font:9px/9px 'Liberation Sans',sans-serif;color:#c8c8c8">2</div>
<div class="t" style="left:84px;top:435.9px;font:9px/9px 'Liberation Sans',sans-serif;color:#c8c8c8">3</div>
<div class="t" style="left:84px;top:494.9px;font:9px/9px 'Liberation Sans',sans-serif;color:#c8c8c8">4</div>
<div class="t" style="left:84px;top:554.0px;font:9px/9px 'Liberation Sans',sans-serif;color:#c8c8c8">5</div>
<div class="t" style="left:84px;top:613.0px;font:9px/9px 'Liberation Sans',sans-serif;color:#c8c8c8">6</div>
<div class="t" style="left:84px;top:672.0px;font:9px/9px 'Liberation Sans',sans-serif;color:#c8c8c8">7</div>
<div class="t" style="left:84px;top:731.0px;font:9px/9px 'Liberation Sans',sans-serif;color:#c8c8c8">8</div>
<div class="t" style="left:84px;top:790.1px;font:9px/9px 'Liberation Sans',sans-serif;color:#c8c8c8">9</div>
<div class="t" style="left:84px;top:849.1px;font:9px/9px 'Liberation Sans',sans-serif;color:#c8c8c8">1</div>
<div class="t" style="left:84px;top:856.6px;font:9px/9px 'Liberation Sans',sans-serif;color:#c8c8c8">0</div>
<div class="t" style="left:84px;top:908.1px;font:9px/9px 'Liberation Sans',sans-serif;color:#c8c8c8">1</div>
<div class="t" style="left:84px;top:915.6px;font:9px/9px 'Liberation Sans',sans-serif;color:#c8c8c8">1</div>
<div class="t" style="left:84px;top:967.2px;font:9px/9px 'Liberation Sans',sans-serif;color:#c8c8c8">1</div>
<div class="t" style="left:84px;top:974.7px;font:9px/9px 'Liberation Sans',sans-serif;color:#c8c8c8">2</div>
<div class="a" style="left:1349px;top:81px;width:17px;height:927px;background:linear-gradient(90deg,#2b2b2b,#464646)"></div>
<div class="a" style="left:1366px;top:61px;width:2px;height:947px;background:#292929"></div>
<div class="a" style="left:97px;top:98px;width:1252px;height:910px;background:#292929"></div>
<div class="a" style="left:97px;top:98px;width:4px;height:910px;background:#2e2e2e"></div>
<div class="a" style="left:121px;top:256px;width:1204px;height:618px;background:#ece8d9;overflow:hidden">
<div class="a" style="left:0;top:235px;width:1204px;height:145px;background:#3d332e"></div>
<div class="a" style="left:139.4px;top:534px;width:335.6px;height:335.6px;border-radius:50%;background:#8fcbc7"></div>
</div>
<div class="a" style="left:121px;top:873px;width:1074px;height:1px;background:#1a1a1a"></div>
<div class="t" style="left:193.40px;top:326.61px;font:normal normal 17px/17px 'Liberation Sans',sans-serif;color:#4a463f;transform:scaleX(0.9345);transform-origin:0 0;-webkit-text-stroke:0.6px #ece8d9;">ALS KREATIVE UND IDEENREICHE DESIGNAGENTUR BIETEN WIR</div>
<div class="t" style="left:214.30px;top:363.61px;font:normal normal 17px/17px 'Liberation Sans',sans-serif;color:#4a463f;transform:scaleX(0.9159);transform-origin:0 0;-webkit-text-stroke:0.6px #ece8d9;">IHNEN NUR DAS BESTE WENN ES UM WERBETEXTE, ONLINE</div>
<div class="t" style="left:260.10px;top:401.61px;font:normal normal 17px/17px 'Liberation Sans',sans-serif;color:#4a463f;transform:scaleX(0.9379);transform-origin:0 0;-webkit-text-stroke:0.6px #ece8d9;">MARKETING, FOTOGRAFIE, GRAFIK,- WEB- UND</div>
<div class="t" style="left:338.00px;top:438.61px;font:normal normal 17px/17px 'Liberation Sans',sans-serif;color:#4a463f;transform:scaleX(0.9329);transform-origin:0 0;-webkit-text-stroke:0.6px #ece8d9;">CORPORATE DESIGN GEHT.</div>
<div class="t" style="left:778.50px;top:687.61px;font:normal normal 17px/17px 'Liberation Sans',sans-serif;color:#4a463f;transform:scaleX(0.9432);transform-origin:0 0;-webkit-text-stroke:0.6px #ece8d9;">MIT DER KREATIVATION DESIGNAGENTUR FINDEN SIE EINEN</div>
<div class="t" style="left:758.80px;top:724.61px;font:normal normal 17px/17px 'Liberation Sans',sans-serif;color:#4a463f;transform:scaleX(0.9099);transform-origin:0 0;-webkit-text-stroke:0.6px #ece8d9;">STARKEN PARTNER, DER IHNEN MIT DURCHDACHTEN STRATEGIEN,</div>
<div class="t" style="left:746.70px;top:762.61px;font:normal normal 17px/17px 'Liberation Sans',sans-serif;color:#4a463f;transform:scaleX(0.9240);transform-origin:0 0;-webkit-text-stroke:0.6px #ece8d9;">UNGEWÖHNLICHEN IDEEN UND PERFEKTER REALISIERUNG ZU SEITE</div>
<div class="t" style="left:990.90px;top:799.61px;font:normal normal 17px/17px 'Liberation Sans',sans-serif;color:#4a463f;transform:scaleX(0.8874);transform-origin:0 0;-webkit-text-stroke:0.6px #ece8d9;">STEHT.</div>
<div class="t" style="left:171.00px;top:510.60px;font:italic normal 16px/16px 'Liberation Serif',serif;color:#8fd0c9;transform:scale(1.3826,1.2);transform-origin:0 13.40px;-webkit-text-stroke:0.3px #3d332e;">Social Media Marketing</div>
<div class="t" style="left:461.00px;top:515.60px;font:italic normal 16px/16px 'Liberation Serif',serif;color:#8fd0c9;transform:scale(1.1466,1.2);transform-origin:0 13.40px;-webkit-text-stroke:0.3px #3d332e;">Corporate Design</div>
<div class="t" style="left:624.36px;top:507.39px;font:italic bold 27px/27px 'Liberation Serif',serif;color:#f3efe0;transform:scale(1.2050,1.2);transform-origin:0 22.61px;-webkit-text-stroke:0.9px #3d332e;">Imagefilme</div>
<div class="t" style="left:834.27px;top:501.10px;font:italic normal 16px/16px 'Liberation Serif',serif;color:#8fd0c9;transform:scale(1.3718,1.2);transform-origin:0 13.40px;-webkit-text-stroke:0.3px #3d332e;">Namensfindung</div>
<div class="t" style="left:1132.13px;top:506.60px;font:italic normal 16px/16px 'Liberation Serif',serif;color:#8fd0c9;transform:scale(1.2858,1.2);transform-origin:0 13.40px;-webkit-text-stroke:0.3px #3d332e;">Pressemitteilungen</div>
<div class="t" style="left:993.00px;top:524.10px;font:italic normal 16px/16px 'Liberation Serif',serif;color:#8fd0c9;transform:scale(1.2821,1.2);transform-origin:0 13.40px;-webkit-text-stroke:0.3px #3d332e;">Slogans</div>
<div class="t" style="left:325.00px;top:549.55px;font:italic bold 28px/28px 'Liberation Serif',serif;color:#f3efe0;transform:scale(1.1994,1.2);transform-origin:0 23.45px;-webkit-text-stroke:0.9px #3d332e;">Webdesign</div>
<div class="t" style="left:522.00px;top:574.20px;font:italic normal 16px/16px 'Liberation Serif',serif;color:#8fd0c9;transform:scale(1.5215,1.2);transform-origin:0 13.40px;-webkit-text-stroke:0.3px #3d332e;">Videoschnitt</div>
<div class="t" style="left:708.00px;top:561.60px;font:italic normal 16px/16px 'Liberation Serif',serif;color:#8fd0c9;transform:scale(1.2785,1.2);transform-origin:0 13.40px;-webkit-text-stroke:0.3px #3d332e;">Suchmaschinenwerbung</div>
<div class="t" style="left:1077.36px;top:548.39px;font:italic bold 27px/27px 'Liberation Serif',serif;color:#f3efe0;transform:scale(1.1987,1.2);transform-origin:0 22.61px;-webkit-text-stroke:0.9px #3d332e;">Blogartikel</div>
<div class="t" style="left:180.62px;top:588.60px;font:italic normal 16px/16px 'Liberation Serif',serif;color:#8fd0c9;transform:scale(1.1898,1.2);transform-origin:0 13.40px;-webkit-text-stroke:0.3px #3d332e;">Fotografie</div>
<div class="t" style="left:386.53px;top:603.90px;font:italic normal 16px/16px 'Liberation Serif',serif;color:#8fd0c9;transform:scale(1.2914,1.2);transform-origin:0 13.40px;-webkit-text-stroke:0.3px #3d332e;">Printdesign</div>
<div class="t" style="left:644.00px;top:603.60px;font:italic normal 16px/16px 'Liberation Serif',serif;color:#8fd0c9;transform:scale(1.2487,1.2);transform-origin:0 13.40px;-webkit-text-stroke:0.3px #3d332e;">Blogbetreuung</div>
<div class="t" style="left:843.60px;top:591.39px;font:italic bold 27px/27px 'Liberation Serif',serif;color:#f3efe0;transform:scale(1.1543,1.2);transform-origin:0 22.61px;-webkit-text-stroke:0.9px #3d332e;">Werbetexte</div>
<div class="t" style="left:1019.80px;top:604.60px;font:italic normal 16px/16px 'Liberation Serif',serif;color:#8fd0c9;transform:scale(1.3228,1.2);transform-origin:0 13.40px;-webkit-text-stroke:0.3px #3d332e;">Suchmaschinenoptimierung</div>
<div class="a" style="left:97px;top:170px;width:1251px;height:1px;background:#5fe3e3"></div>
<div class="a" style="left:97px;top:267px;width:1251px;height:1px;background:#5fe3e3"></div>
<div class="a" style="left:97px;top:285px;width:1251px;height:1px;background:#5fe3e3"></div>
<div class="a" style="left:97px;top:564px;width:1251px;height:1px;background:#5fe3e3"></div>
<div class="a" style="left:97px;top:844px;width:1251px;height:1px;background:#5fe3e3"></div>
<div class="a" style="left:97px;top:861px;width:1251px;height:1px;background:#5fe3e3"></div>
<div class="a" style="left:132px;top:98px;width:1px;height:910px;background:#5fe3e3"></div>
<div class="a" style="left:150px;top:98px;width:1px;height:910px;background:#5fe3e3"></div>
<div class="a" style="left:722px;top:98px;width:1px;height:910px;background:#5fe3e3"></div>
<div class="a" style="left:1017px;top:98px;width:1px;height:910px;background:#5fe3e3"></div>
<div class="a" style="left:1296px;top:98px;width:1px;height:910px;background:#5fe3e3"></div>
<div class="a" style="left:1313px;top:98px;width:1px;height:910px;background:#5fe3e3"></div>
<div class="a" style="left:1368px;top:61px;width:303px;height:13px;background:#393939"></div>
<svg class="a" style="left:1393px;top:65px;" width="9" height="6" viewBox="0 0 9 6"><path d="M4 0 L0 3 L4 6Z M8.5 0 L4.5 3 L8.5 6Z" fill="#d0d0d0"/></svg>
<svg class="a" style="left:1665px;top:65px;" width="6" height="6" viewBox="0 0 6 6"><path d="M1 0 L5 3 L1 6Z" fill="#d0d0d0"/></svg>
<div class="a" style="left:1368px;top:74px;width:37px;height:934px;background:#555555"></div>
<div class="a" style="left:1405px;top:61px;width:3px;height:947px;background:#3b3b3b"></div>
<svg class="a" style="left:1377px;top:78px;" width="20" height="3" viewBox="0 0 20 3"><rect x="0" y="0" width="1" height="3" fill="#353535"/><rect x="2" y="0" width="1" height="3" fill="#353535"/><rect x="4" y="0" width="1" height="3" fill="#353535"/><rect x="6" y="0" width="1" height="3" fill="#353535"/><rect x="8" y="0" width="1" height="3" fill="#353535"/><rect x="10" y="0" width="1" height="3" fill="#353535"/><rect x="12" y="0" width="1" height="3" fill="#353535"/><rect x="14" y="0" width="1" height="3" fill="#353535"/><rect x="16" y="0" width="1" height="3" fill="#353535"/><rect x="18" y="0" width="1" height="3" fill="#353535"/></svg>
<svg class="a" style="left:1379px;top:89px;" width="18" height="22" viewBox="0 0 18 22"><rect x="1.5" y="1.5" width="5" height="5" fill="none" stroke="#c8c8c8"/><rect x="1.5" y="8.5" width="5" height="5" fill="none" stroke="#c8c8c8"/><rect x="1" y="15" width="6" height="6" fill="#9a9a9a"/><path d="M9 5 L14 1.5 L14.5 7Z" fill="#c8c8c8"/><path d="M13 4 Q18 9 11 17" fill="none" stroke="#c8c8c8" stroke-width="2.2"/></svg>
<svg class="a" style="left:1380px;top:118px;" width="16" height="15" viewBox="0 0 16 15"><path d="M0 0 L16 7.5 L0 15Z" fill="#bdbdbd"/></svg>
<div class="a" style="left:1368px;top:142px;width:37px;height:1px;background:#3b3b3b"></div>
<svg class="a" style="left:1377px;top:147px;" width="20" height="3" viewBox="0 0 20 3"><rect x="0" y="0" width="1" height="3" fill="#353535"/><rect x="2" y="0" width="1" height="3" fill="#353535"/><rect x="4" y="0" width="1" height="3" fill="#353535"/><rect x="6" y="0" width="1" height="3" fill="#353535"/><rect x="8" y="0" width="1" height="3" fill="#353535"/><rect x="10" y="0" width="1" height="3" fill="#353535"/><rect x="12" y="0" width="1" height="3" fill="#353535"/><rect x="14" y="0" width="1" height="3" fill="#353535"/><rect x="16" y="0" width="1" height="3" fill="#353535"/><rect x="18" y="0" width="1" height="3" fill="#353535"/></svg>
<svg class="a" style="left:1379px;top:157px;" width="18" height="18" viewBox="0 0 18 18"><circle cx="9" cy="9" r="8.5" fill="#c0c0c0"/><rect x="7.5" y="7" width="3" height="7.5" fill="#555"/><circle cx="9" cy="4.5" r="1.6" fill="#555"/></svg>
<div class="a" style="left:1368px;top:183px;width:37px;height:1px;background:#3b3b3b"></div>
<svg class="a" style="left:1377px;top:188px;" width="20" height="3" viewBox="0 0 20 3"><rect x="0" y="0" width="1" height="3" fill="#353535"/><rect x="2" y="0" width="1" height="3" fill="#353535"/><rect x="4" y="0" width="1" height="3" fill="#353535"/><rect x="6" y="0" width="1" height="3" fill="#353535"/><rect x="8" y="0" width="1" height="3" fill="#353535"/><rect x="10" y="0" width="1" height="3" fill="#353535"/><rect x="12" y="0" width="1" height="3" fill="#353535"/><rect x="14" y="0" width="1" height="3" fill="#353535"/><rect x="16" y="0" width="1" height="3" fill="#353535"/><rect x="18" y="0" width="1" height="3" fill="#353535"/></svg>
<svg class="a" style="left:1378px;top:200px;" width="18" height="14" viewBox="0 0 18 14"><rect x="0.5" y="0.5" width="17" height="13" fill="#c4c4c4"/><path d="M6.5 0V14 M12 0V14 M0 7H18" stroke="#555" stroke-width="1.2"/></svg>
<div class="a" style="left:1368px;top:224px;width:37px;height:1px;background:#3b3b3b"></div>
<svg class="a" style="left:1377px;top:229px;" width="20" height="3" viewBox="0 0 20 3"><rect x="0" y="0" width="1" height="3" fill="#353535"/><rect x="2" y="0" width="1" height="3" fill="#353535"/><rect x="4" y="0" width="1" height="3" fill="#353535"/><rect x="6" y="0" width="1" height="3" fill="#353535"/><rect x="8" y="0" width="1" height="3" fill="#353535"/><rect x="10" y="0" width="1" height="3" fill="#353535"/><rect x="12" y="0" width="1" height="3" fill="#353535"/><rect x="14" y="0" width="1" height="3" fill="#353535"/><rect x="16" y="0" width="1" height="3" fill="#353535"/><rect x="18" y="0" width="1" height="3" fill="#353535"/></svg>
<svg class="a" style="left:1378px;top:238px;" width="18" height="20" viewBox="0 0 18 20"><rect x="4" y="1" width="14" height="12" fill="#c4c4c4"/><text x="0" y="18" font-family="Liberation Serif" font-style="italic" font-size="13" fill="#c4c4c4">fx</text></svg>
<div class="a" style="left:1368px;top:265px;width:37px;height:1px;background:#3b3b3b"></div>
<div class="a" style="left:1408px;top:74px;width:263px;height:934px;background:#535353"></div>
<div class="a" style="left:1408px;top:74px;width:263px;height:17px;background:#3c3c3c"></div>
<div class="a" style="left:1408px;top:74px;width:50px;height:17px;background:#535353;border-right:1px solid #383838"></div>
<div class="t" style="left:1415.00px;top:76.69px;font:normal bold 11px/11px 'Liberation Sans',sans-serif;color:#e6e6e6;transform:scaleX(0.8654);transform-origin:0 0;">Zeichen</div>
<div class="a" style="left:1458px;top:74px;width:45px;height:17px;background:#474747;border-right:1px solid #383838"></div>
<div class="t" style="left:1465.60px;top:76.69px;font:normal bold 11px/11px 'Liberation Sans',sans-serif;color:#9c9c9c;transform:scaleX(0.8421);transform-origin:0 0;">Absatz</div>
<svg class="a" style="left:1657px;top:79px;" width="14" height="8" viewBox="0 0 14 8"><path d="M0 2 H6 L3 5.5Z" fill="#d0d0d0"/><path d="M7 1H14 M7 3.5H14 M7 6H14" stroke="#d0d0d0" stroke-width="1.2"/></svg>
<div class="a" style="left:1417px;top:97px;width:110px;height:19px;background:#3b3b3b;border-top:1px solid #333;border-bottom:1px solid #5e5e5e"></div>
<div class="a" style="left:1508px;top:97px;width:19px;height:19px;background:linear-gradient(#686868,#5a5a5a);border:1px solid #3e3e3e;border-radius:1px"></div>
<svg class="a" style="left:1513.5px;top:104.5px;" width="8" height="5" viewBox="0 0 8 5"><path d="M0 0 H8 L4 4.5Z" fill="#e8e8e8"/></svg>
<div class="t" style="left:1422.00px;top:100.69px;font:normal normal 11px/11px 'Liberation Sans',sans-serif;color:#ececec;transform:scaleX(0.8640);transform-origin:0 0;">JaneAusten</div>
<div class="a" style="left:1538px;top:97px;width:77px;height:19px;background:#4b4b4b;border-top:1px solid #333;border-bottom:1px solid #5e5e5e"></div>
<div class="a" style="left:1595px;top:97px;width:20px;height:19px;background:linear-gradient(#686868,#5a5a5a);border:1px solid #3e3e3e;border-radius:1px"></div>
<svg class="a" style="left:1601.0px;top:104.5px;" width="8" height="5" viewBox="0 0 8 5"><path d="M0 0 H8 L4 4.5Z" fill="#8c8c8c"/></svg>
<div class="t" style="left:1543.70px;top:100.69px;font:normal normal 11px/11px 'Liberation Sans',sans-serif;color:#8c8c8c;transform:scaleX(0.8824);transform-origin:0 0;">NoSecret</div>
<div class="a" style="left:1408px;top:121px;width:230px;height:1px;background:#3d3d3d"></div><div class="a" style="left:1408px;top:122px;width:230px;height:1px;background:#5d5d5d"></div>
<svg class="a" style="left:1410px;top:129px;" width="18" height="15" viewBox="0 0 18 15"><text x="0" y="14" font-family="Liberation Serif" font-size="11" fill="#a8a8a8">T</text><text x="5" y="14" font-family="Liberation Serif" font-size="19" fill="#c8c8c8">T</text></svg>
<div class="a" style="left:1431px;top:127px;width:96px;height:19px;background:#3b3b3b;border-top:1px solid #333;border-bottom:1px solid #5e5e5e"></div>
<div class="a" style="left:1508px;top:127px;width:19px;height:19px;background:linear-gradient(#686868,#5a5a5a);border:1px solid #3e3e3e;border-radius:1px"></div>
<svg class="a" style="left:1513.5px;top:134.5px;" width="8" height="5" viewBox="0 0 8 5"><path d="M0 0 H8 L4 4.5Z" fill="#e8e8e8"/></svg>
<div class="t" style="left:1435.80px;top:130.69px;font:normal normal 11px/11px 'Liberation Sans',sans-serif;color:#ececec;transform:scaleX(0.8776);transform-origin:0 0;">8 Pt</div>
<svg class="a" style="left:1534px;top:127px;" width="18" height="17" viewBox="0 0 18 17"><path d="M3 1 V9 M1 3 L3 1 L5 3 M1 7 L3 9 L5 7" fill="none" stroke="#c8c8c8" stroke-width="1"/><path d="M6 1.5H18 M6 9.5H18" stroke="#c8c8c8"/><text x="7.5" y="9" font-family="Liberation Sans" font-size="9" fill="#c8c8c8">A</text><text x="7.5" y="17" font-family="Liberation Sans" font-size="9" fill="#c8c8c8">A</text></svg>
<div class="a" style="left:1555px;top:127px;width:76px;height:19px;background:#3b3b3b;border-top:1px solid #333;border-bottom:1px solid #5e5e5e"></div>
<div class="a" style="left:1613px;top:127px;width:18px;height:19px;background:linear-gradient(#686868,#5a5a5a);border:1px solid #3e3e3e;border-radius:1px"></div>
<svg class="a" style="left:1618.0px;top:134.5px;" width="8" height="5" viewBox="0 0 8 5"><path d="M0 0 H8 L4 4.5Z" fill="#e8e8e8"/></svg>
<div class="t" style="left:1560.60px;top:130.69px;font:normal normal 11px/11px 'Liberation Sans',sans-serif;color:#ececec;transform:scaleX(0.8444);transform-origin:0 0;">18 Pt</div>
<svg class="a" style="left:1410px;top:154px;" width="18" height="15" viewBox="0 0 18 15"><text x="0" y="12" font-family="Liberation Sans" font-size="13" fill="#c8c8c8" letter-spacing="-2">V/A</text><path d="M6 14H17 M6 14 l3 -2 v4z" stroke="#c8c8c8" fill="#c8c8c8" stroke-width="1"/></svg>
<div class="a" style="left:1431px;top:151px;width:96px;height:19px;background:#3b3b3b;border-top:1px solid #333;border-bottom:1px solid #5e5e5e"></div>
<div class="a" style="left:1508px;top:151px;width:19px;height:19px;background:linear-gradient(#686868,#5a5a5a);border:1px solid #3e3e3e;border-radius:1px"></div>
<svg class="a" style="left:1513.5px;top:158.5px;" width="8" height="5" viewBox="0 0 8 5"><path d="M0 0 H8 L4 4.5Z" fill="#e8e8e8"/></svg>
<div class="t" style="left:1436.40px;top:154.69px;font:normal normal 11px/11px 'Liberation Sans',sans-serif;color:#ececec;transform:scaleX(0.8558);transform-origin:0 0;">Metrisch</div>
<svg class="a" style="left:1534px;top:152px;" width="18" height="16" viewBox="0 0 18 16"><rect x="0" y="0" width="18" height="11" fill="#a0a0a0"/><text x="0.5" y="10.5" font-family="Liberation Sans" font-weight="bold" font-size="11.5" fill="#2c2c2c" letter-spacing="-1">VA</text><path d="M1 14H17 M1 14 l3 -2 v4z M17 14 l-3 -2 v4z" stroke="#c8c8c8" fill="#c8c8c8" stroke-width="1"/></svg>
<div class="a" style="left:1555px;top:151px;width:76px;height:19px;background:#3b3b3b;border-top:1px solid #333;border-bottom:1px solid #5e5e5e"></div>
<div class="a" style="left:1613px;top:151px;width:18px;height:19px;background:linear-gradient(#686868,#5a5a5a);border:1px solid #3e3e3e;border-radius:1px"></div>
<svg class="a" style="left:1618.0px;top:158.5px;" width="8" height="5" viewBox="0 0 8 5"><path d="M0 0 H8 L4 4.5Z" fill="#e8e8e8"/></svg>
<div class="t" style="left:1560.50px;top:154.69px;font:normal normal 11px/11px 'Liberation Sans',sans-serif;color:#ececec;transform:scaleX(0.9836);transform-origin:0 0;">0</div>
<div class="a" style="left:1408px;top:175px;width:230px;height:1px;background:#3d3d3d"></div><div class="a" style="left:1408px;top:176px;width:230px;height:1px;background:#5d5d5d"></div>
<svg class="a" style="left:1410px;top:181px;" width="18" height="15" viewBox="0 0 18 15"><path d="M3 1 V14 M1 3 L3 1 L5 3 M1 12 L3 14 L5 12" fill="none" stroke="#c8c8c8" stroke-width="1.1"/><text x="5" y="14" font-family="Liberation Serif" font-size="18" fill="#c8c8c8">T</text></svg>
<div class="a" style="left:1432px;top:180px;width:54px;height:18px;background:#3b3b3b;border-top:1px solid #333;border-bottom:1px solid #5e5e5e"></div>
<div class="t" style="left:1437.40px;top:183.69px;font:normal normal 11px/11px 'Liberation Sans',sans-serif;color:#ececec;transform:scaleX(0.8683);transform-origin:0 0;">100%</div>
<svg class="a" style="left:1410px;top:202px;" width="18" height="16" viewBox="0 0 18 16"><text x="0" y="10" font-family="Liberation Sans" font-size="11" fill="#c8c8c8">A</text><text x="9" y="7" font-family="Liberation Sans" font-size="8" fill="#c8c8c8">a</text><path d="M0 11.5H9 M12 15V9 l-2 2 M12 9 l2 2" stroke="#c8c8c8" fill="none" stroke-width="1"/></svg>
<div class="a" style="left:1432px;top:200px;width:54px;height:18px;background:#3b3b3b;border-top:1px solid #333;border-bottom:1px solid #5e5e5e"></div>
<div class="t" style="left:1437.00px;top:203.69px;font:normal normal 11px/11px 'Liberation Sans',sans-serif;color:#ececec;transform:scaleX(0.8724);transform-origin:0 0;">0 Pt</div>
<svg class="a" style="left:1550px;top:180px;" width="20" height="17" viewBox="0 0 20 17"><text x="2" y="12" font-family="Liberation Serif" font-weight="bold" font-size="16" fill="#c8c8c8">T</text><path d="M1 15H19 M1 15 l3 -2 v4z M19 15 l-3 -2 v4z" stroke="#c8c8c8" fill="#c8c8c8" stroke-width="1"/></svg>
<div class="a" style="left:1573px;top:180px;width:54px;height:18px;background:#3b3b3b;border-top:1px solid #333;border-bottom:1px solid #5e5e5e"></div>
<div class="t" style="left:1578.40px;top:183.69px;font:normal normal 11px/11px 'Liberation Sans',sans-serif;color:#ececec;transform:scaleX(0.8754);transform-origin:0 0;">100%</div>
<div class="t" style="left:1536.30px;top:202.69px;font:normal normal 11px/11px 'Liberation Sans',sans-serif;color:#e0e0e0;transform:scaleX(0.8805);transform-origin:0 0;">Farbe:</div>
<div class="a" style="left:1573px;top:200px;width:54px;height:18px;background:#8ed0cb;border:1px solid #3a4847"></div>
<div class="a" style="left:1408px;top:222px;width:230px;height:1px;background:#3d3d3d"></div><div class="a" style="left:1408px;top:223px;width:230px;height:1px;background:#5d5d5d"></div>
<div class="t" style="left:1432.50px;top:231.97px;font:normal bold 14px/14px 'Liberation Serif',serif;color:#d6d6d6;transform:scaleX(1.2796);transform-origin:0 0;">T</div>
<div class="t" style="left:1457.80px;top:231.97px;font:italic normal 14px/14px 'Liberation Serif',serif;color:#d6d6d6;transform:scaleX(1.2874);transform-origin:0 0;">T</div>
<div class="t" style="left:1477.60px;top:231.97px;font:normal bold 14px/14px 'Liberation Serif',serif;color:#d6d6d6;transform:scaleX(0.9305);transform-origin:0 0;">TT</div>
<div class="t" style="left:1502.50px;top:231.97px;font:normal bold 14px/14px 'Liberation Serif',serif;color:#d6d6d6;transform:scaleX(0.9140);transform-origin:0 0;">T</div>
<div class="t" style="left:1527.80px;top:231.97px;font:normal bold 14px/14px 'Liberation Serif',serif;color:#d6d6d6;transform:scaleX(1.0430);transform-origin:0 0;">T</div>
<div class="t" style="left:1552.60px;top:231.97px;font:normal bold 14px/14px 'Liberation Serif',serif;color:#d6d6d6;transform:scaleX(1.0108);transform-origin:0 0;">T</div>
<div class="t" style="left:1577.60px;top:231.97px;font:normal bold 14px/14px 'Liberation Serif',serif;color:#d6d6d6;transform:scaleX(1.1183);transform-origin:0 0;">T</div>
<div class="t" style="left:1600.70px;top:231.97px;font:normal bold 14px/14px 'Liberation Serif',serif;color:#d6d6d6;transform:scaleX(1.2258);transform-origin:0 0;">T</div>
<div class="t" style="left:1511.00px;top:236.16px;font:normal bold 9px/9px 'Liberation Serif',serif;color:#d6d6d6;transform:scaleX(1.4333);transform-origin:0 0;">T</div>
<div class="t" style="left:1538.50px;top:232.14px;font:normal bold 7px/7px 'Liberation Serif',serif;color:#d6d6d6;">1</div>
<div class="t" style="left:1563.00px;top:239.14px;font:normal bold 7px/7px 'Liberation Serif',serif;color:#d6d6d6;">1</div>
<div class="a" style="left:1577.6px;top:245.5px;width:10.4px;height:1.3px;background:#d6d6d6"></div>
<div class="a" style="left:1600px;top:238.5px;width:12.5px;height:1.3px;background:#d6d6d6"></div>
<div class="a" style="left:1408px;top:254px;width:230px;height:1px;background:#3d3d3d"></div><div class="a" style="left:1408px;top:255px;width:230px;height:1px;background:#5d5d5d"></div>
<div class="t" style="left:1434.00px;top:264.67px;font:normal normal 14px/14px 'Liberation Serif',serif;color:#8a8a8a;transform:scaleX(1.2093);transform-origin:0 0;">fi</div>
<div class="t" style="left:1456.30px;top:265.51px;font:italic normal 13px/13px 'Liberation Serif',serif;color:#8a8a8a;transform:scaleX(1.4059);transform-origin:0 0;">&amp;</div>
<div class="t" style="left:1481.60px;top:264.67px;font:normal normal 14px/14px 'Liberation Serif',serif;color:#8a8a8a;transform:scaleX(1.2796);transform-origin:0 0;">st</div>
<div class="t" style="left:1505.31px;top:263.84px;font:italic normal 15px/15px 'Liberation Serif',serif;color:#8a8a8a;transform:scaleX(1.4510);transform-origin:0 0;">A</div>
<div class="t" style="left:1526.30px;top:264.67px;font:normal normal 14px/14px 'Liberation Serif',serif;color:#8a8a8a;transform:scaleX(1.4355);transform-origin:0 0;">aa</div>
<div class="t" style="left:1552.30px;top:264.67px;font:italic normal 14px/14px 'Liberation Serif',serif;color:#8a8a8a;transform:scaleX(1.5402);transform-origin:0 0;">T</div>
<div class="t" style="left:1575.40px;top:264.67px;font:normal normal 14px/14px 'Liberation Serif',serif;color:#8a8a8a;transform:scaleX(0.8000);transform-origin:0 0;">1</div>
<div class="t" style="left:1582.00px;top:262.46px;font:normal normal 9px/9px 'Liberation Serif',serif;color:#8a8a8a;transform:scaleX(1.5000);transform-origin:0 0;">st</div>
<div class="t" style="left:1600.00px;top:264.67px;font:normal normal 14px/14px 'Liberation Serif',serif;color:#8a8a8a;transform:scaleX(1.2667);transform-origin:0 0;">½</div>
<div class="a" style="left:1526px;top:263px;width:18px;height:1px;background:#8a8a8a"></div>
<div class="a" style="left:1408px;top:286px;width:230px;height:1px;background:#3d3d3d"></div><div class="a" style="left:1408px;top:287px;width:230px;height:1px;background:#5d5d5d"></div>
<div class="a" style="left:1415px;top:292px;width:116px;height:20px;border:1px solid #2e2e2e;border-radius:2px;background:linear-gradient(#6e6e6e,#5c5c5c);box-shadow:inset 0 1px 0 #7a7a7a"></div>
<div class="t" style="left:1424.30px;top:296.09px;font:normal normal 11px/11px 'Liberation Sans',sans-serif;color:#ececec;transform:scaleX(0.9115);transform-origin:0 0;">Deutsch: neue Re...</div>
<svg class="a" style="left:1517px;top:296.0px;" width="8" height="12" viewBox="0 0 8 12"><path d="M0.5 4.5 L4 1 L7.5 4.5Z M0.5 7.5 L4 11 L7.5 7.5Z" fill="#e8e8e8"/></svg>
<svg class="a" style="left:1536px;top:296px;" width="15" height="12" viewBox="0 0 15 12"><text x="0" y="7.5" font-family="Liberation Serif" font-size="11" fill="#c8c8c8">a</text><text x="6" y="11.5" font-family="Liberation Serif" font-size="14" fill="#c8c8c8">a</text></svg>
<div class="a" style="left:1557px;top:292px;width:74px;height:20px;border:1px solid #2e2e2e;border-radius:2px;background:linear-gradient(#6e6e6e,#5c5c5c);box-shadow:inset 0 1px 0 #7a7a7a"></div>
<div class="t" style="left:1565.00px;top:296.09px;font:normal normal 11px/11px 'Liberation Sans',sans-serif;color:#ececec;transform:scaleX(0.9340);transform-origin:0 0;">Scharf</div>
<svg class="a" style="left:1617px;top:296.0px;" width="8" height="12" viewBox="0 0 8 12"><path d="M0.5 4.5 L4 1 L7.5 4.5Z M0.5 7.5 L4 11 L7.5 7.5Z" fill="#e8e8e8"/></svg>
<div class="a" style="left:1408px;top:316px;width:263px;height:4px;background:#383838"></div>
<div class="a" style="left:1408px;top:320px;width:263px;height:17px;background:#3c3c3c"></div>
<div class="a" style="left:1408px;top:320px;width:83px;height:17px;background:#535353;border-right:1px solid #383838"></div>
<div class="t" style="left:1415.40px;top:322.69px;font:normal bold 11px/11px 'Liberation Sans',sans-serif;color:#e6e6e6;transform:scaleX(0.8887);transform-origin:0 0;">Absatzformate</div>
<div class="a" style="left:1491px;top:320px;width:89px;height:17px;background:#474747;border-right:1px solid #383838"></div>
<div class="t" style="left:1498.20px;top:322.69px;font:normal bold 11px/11px 'Liberation Sans',sans-serif;color:#9c9c9c;transform:scaleX(0.8938);transform-origin:0 0;">Zeichenformate</div>
<svg class="a" style="left:1657px;top:325px;" width="14" height="8" viewBox="0 0 14 8"><path d="M0 2 H6 L3 5.5Z" fill="#d0d0d0"/><path d="M7 1H14 M7 3.5H14 M7 6H14" stroke="#d0d0d0" stroke-width="1.2"/></svg>
<div class="a" style="left:1408px;top:337px;width:255px;height:82px;background:#484848"></div>
<div class="a" style="left:1663px;top:337px;width:8px;height:82px;background:#3e3e3e"></div>
<div class="a" style="left:1408px;top:339px;width:255px;height:22px;background:#5b6a7c"></div>
<div class="t" style="left:1415.80px;top:342.69px;font:italic normal 11px/11px 'Liberation Sans',sans-serif;color:#eef2f6;transform:scaleX(0.8702);transform-origin:0 0;">Basisabsatz</div>
<div class="a" style="left:1408px;top:419px;width:263px;height:1px;background:#3a3a3a"></div>
<div class="a" style="left:1408px;top:420px;width:263px;height:17px;background:#535353"></div>
<svg class="a" style="left:1547px;top:421px;" width="14" height="13" viewBox="0 0 14 13"><path d="M3 7 A5 5 0 1 1 7 11" fill="none" stroke="#8c8c8c" stroke-width="1.6"/><path d="M0 5 L4 9 L6 4Z" fill="#8c8c8c"/><path d="M1 12.5H13" stroke="#8c8c8c"/></svg>
<svg class="a" style="left:1577px;top:422px;" width="13" height="12" viewBox="0 0 13 12"><path d="M1 6 L5 11 L12 1" fill="none" stroke="#8c8c8c" stroke-width="2.4"/></svg>
<svg class="a" style="left:1609px;top:422px;" width="12" height="12" viewBox="0 0 12 12"><rect x="2" y="0" width="10" height="11" fill="#d0d0d0"/><path d="M0 6 H6 V12Z" fill="#3a3a3a"/></svg>
<svg class="a" style="left:1637px;top:421px;" width="12" height="14" viewBox="0 0 12 14"><rect x="0" y="2" width="12" height="1.5" fill="#8c8c8c"/><rect x="4" y="0" width="4" height="2" fill="#8c8c8c"/><path d="M1.5 4 H10.5 L10 13 H2Z" fill="none" stroke="#8c8c8c" stroke-width="1.2"/><path d="M4.5 5V12 M7.5 5V12" stroke="#8c8c8c"/></svg>
<div class="a" style="left:1408px;top:437px;width:263px;height:3px;background:#383838"></div>
<div class="a" style="left:1408px;top:440px;width:263px;height:17px;background:#3c3c3c"></div>
<div class="a" style="left:1408px;top:440px;width:47px;height:17px;background:#535353;border-right:1px solid #383838"></div>
<div class="t" style="left:1415.40px;top:442.69px;font:normal bold 11px/11px 'Liberation Sans',sans-serif;color:#e6e6e6;transform:scaleX(0.8212);transform-origin:0 0;">Ebenen</div>
<div class="a" style="left:1455px;top:440px;width:46px;height:17px;background:#474747;border-right:1px solid #383838"></div>
<div class="t" style="left:1462.30px;top:442.69px;font:normal bold 11px/11px 'Liberation Sans',sans-serif;color:#9c9c9c;transform:scaleX(0.8615);transform-origin:0 0;">Kanäle</div>
<div class="a" style="left:1501px;top:440px;width:42px;height:17px;background:#474747;border-right:1px solid #383838"></div>
<div class="t" style="left:1509.30px;top:442.69px;font:normal bold 11px/11px 'Liberation Sans',sans-serif;color:#9c9c9c;transform:scaleX(0.8767);transform-origin:0 0;">Pfade</div>
<svg class="a" style="left:1657px;top:445px;" width="14" height="8" viewBox="0 0 14 8"><path d="M0 2 H6 L3 5.5Z" fill="#d0d0d0"/><path d="M7 1H14 M7 3.5H14 M7 6H14" stroke="#d0d0d0" stroke-width="1.2"/></svg>
<div class="a" style="left:1412px;top:462px;width:75px;height:19px;border:1px solid #2e2e2e;border-radius:2px;background:linear-gradient(#6e6e6e,#5c5c5c);box-shadow:inset 0 1px 0 #7a7a7a"></div>
<div class="t" style="left:1434.00px;top:464.79px;font:normal normal 11px/11px 'Liberation Sans',sans-serif;color:#ececec;transform:scaleX(0.9362);transform-origin:0 0;">Art</div>
<svg class="a" style="left:1473px;top:465.5px;" width="8" height="12" viewBox="0 0 8 12"><path d="M0.5 4.5 L4 1 L7.5 4.5Z M0.5 7.5 L4 11 L7.5 7.5Z" fill="#e8e8e8"/></svg>
<svg class="a" style="left:1418px;top:466px;" width="11" height="11" viewBox="0 0 11 11"><circle cx="6.5" cy="4.5" r="3.6" fill="none" stroke="#d8d8d8" stroke-width="1.3"/><path d="M4 7 L0.8 10.2" stroke="#d8d8d8" stroke-width="1.6"/></svg>
<svg class="a" style="left:1521px;top:465px;" width="13" height="11" viewBox="0 0 13 11"><rect x="0.5" y="0.5" width="12" height="10" fill="none" stroke="#c4c4c4"/><path d="M2 9 L5 5 L7 7 L9 4 L11 9Z" fill="#c4c4c4"/><circle cx="9.5" cy="3" r="1" fill="#c4c4c4"/></svg>
<svg class="a" style="left:1545px;top:465px;" width="12" height="12" viewBox="0 0 12 12"><circle cx="6" cy="6" r="5.5" fill="#c4c4c4"/><path d="M2 9 L10 3" stroke="#555" stroke-width="1.4"/><path d="M6 6 L10.5 3 A5.5 5.5 0 0 1 6 11.5Z" fill="#999"/></svg>
<div class="t" style="left:1569.80px;top:464.27px;font:normal normal 14px/14px 'Liberation Serif',serif;color:#c4c4c4;transform:scaleX(1.2093);transform-origin:0 0;">T</div>
<svg class="a" style="left:1593px;top:464px;" width="13" height="13" viewBox="0 0 13 13"><rect x="2" y="2" width="9" height="9" fill="none" stroke="#c4c4c4" stroke-width="1.1"/><rect x="0.5" y="0.5" width="3" height="3" fill="#555" stroke="#c4c4c4"/><rect x="9.5" y="0.5" width="3" height="3" fill="#555" stroke="#c4c4c4"/><rect x="0.5" y="9.5" width="3" height="3" fill="#555" stroke="#c4c4c4"/><rect x="9.5" y="9.5" width="3" height="3" fill="#555" stroke="#c4c4c4"/></svg>
<svg class="a" style="left:1618px;top:464px;" width="12" height="13" viewBox="0 0 12 13"><path d="M4 0.5 H8 L11.5 4 V12.5 H4Z" fill="none" stroke="#c4c4c4"/><rect x="0" y="6" width="6" height="7" fill="#a8a8a8"/></svg>
<div class="a" style="left:1665px;top:462px;width:6px;height:19px;background:linear-gradient(#6e6e6e 50%,#3a3a3a 50%);border:1px solid #333;border-right:0"></div>
<div class="a" style="left:1408px;top:484px;width:263px;height:1px;background:#3d3d3d"></div><div class="a" style="left:1408px;top:485px;width:263px;height:1px;background:#5d5d5d"></div>
<div class="a" style="left:1412px;top:490px;width:148px;height:19px;border:1px solid #2e2e2e;border-radius:2px;background:linear-gradient(#6e6e6e,#5c5c5c);box-shadow:inset 0 1px 0 #7a7a7a"></div>
<div class="t" style="left:1420.10px;top:492.69px;font:normal normal 11px/11px 'Liberation Sans',sans-serif;color:#ececec;transform:scaleX(0.9248);transform-origin:0 0;">Hindurchwirken</div>
<svg class="a" style="left:1546px;top:493.5px;" width="8" height="12" viewBox="0 0 8 12"><path d="M0.5 4.5 L4 1 L7.5 4.5Z M0.5 7.5 L4 11 L7.5 7.5Z" fill="#e8e8e8"/></svg>
<div class="t" style="left:1567.40px;top:492.19px;font:normal normal 11px/11px 'Liberation Sans',sans-serif;color:#e0e0e0;transform:scaleX(0.9010);transform-origin:0 0;">Deckkraft:</div>
<div class="a" style="left:1618px;top:489px;width:53px;height:19px;background:#3b3b3b;border-top:1px solid #333;border-bottom:1px solid #5e5e5e"></div>
<div class="a" style="left:1656px;top:489px;width:15px;height:19px;background:linear-gradient(#686868,#5a5a5a);border:1px solid #3e3e3e;border-radius:1px"></div>
<svg class="a" style="left:1659.5px;top:496.5px;" width="8" height="5" viewBox="0 0 8 5"><path d="M0 0 H8 L4 4.5Z" fill="#e8e8e8"/></svg>
<div class="t" style="left:1623.50px;top:492.19px;font:normal normal 11px/11px 'Liberation Sans',sans-serif;color:#ececec;transform:scaleX(0.8648);transform-origin:0 0;">100%</div>
<div class="a" style="left:1408px;top:512px;width:263px;height:1px;background:#3d3d3d"></div><div class="a" style="left:1408px;top:513px;width:263px;height:1px;background:#5d5d5d"></div>
<div class="t" style="left:1414.20px;top:521.69px;font:normal normal 11px/11px 'Liberation Sans',sans-serif;color:#e0e0e0;transform:scaleX(0.8768);transform-origin:0 0;">Fixieren:</div>
<svg class="a" style="left:1462px;top:522px;" width="11" height="11" viewBox="0 0 11 11"><rect x="0.0" y="0.0" width="3.67" height="3.67" fill="#9a9a9a"/><rect x="3.67" y="0.0" width="3.67" height="3.67" fill="#6f6f6f"/><rect x="7.34" y="0.0" width="3.67" height="3.67" fill="#9a9a9a"/><rect x="0.0" y="3.67" width="3.67" height="3.67" fill="#6f6f6f"/><rect x="3.67" y="3.67" width="3.67" height="3.67" fill="#9a9a9a"/><rect x="7.34" y="3.67" width="3.67" height="3.67" fill="#6f6f6f"/><rect x="0.0" y="7.34" width="3.67" height="3.67" fill="#9a9a9a"/><rect x="3.67" y="7.34" width="3.67" height="3.67" fill="#6f6f6f"/><rect x="7.34" y="7.34" width="3.67" height="3.67" fill="#9a9a9a"/></svg>
<svg class="a" style="left:1481px;top:520px;" width="18" height="14" viewBox="0 0 18 14"><path d="M1 13 Q2 9 5 9 L7 11 Q5 14 1 13Z" fill="#8c8c8c"/><path d="M6 10 L17 1" stroke="#8c8c8c" stroke-width="1.6"/></svg>
<svg class="a" style="left:1505px;top:520px;" width="14" height="14" viewBox="0 0 14 14"><path d="M7 1V13 M1 7H13" stroke="#8c8c8c" stroke-width="1.2"/><path d="M7 0 l-2.5 2.5 h5z M7 14 l-2.5 -2.5 h5z M0 7 l2.5 -2.5 v5z M14 7 l-2.5 -2.5 v5z" fill="#8c8c8c"/></svg>
<svg class="a" style="left:1529px;top:520px;" width="11" height="13" viewBox="0 0 11 13"><path d="M2.5 6 V4 A3 3 0 0 1 8.5 4 V6" fill="none" stroke="#c8c8c8" stroke-width="1.6"/><rect x="0.5" y="6" width="10" height="7" fill="#c8c8c8"/><rect x="4.8" y="8" width="1.6" height="3" fill="#555"/></svg>
<div class="t" style="left:1581.00px;top:520.69px;font:normal normal 11px/11px 'Liberation Sans',sans-serif;color:#e0e0e0;transform:scaleX(0.8587);transform-origin:0 0;">Fläche:</div>
<div class="a" style="left:1618px;top:517px;width:53px;height:19px;background:#3b3b3b;border-top:1px solid #333;border-bottom:1px solid #5e5e5e"></div>
<div class="a" style="left:1656px;top:517px;width:15px;height:19px;background:linear-gradient(#686868,#5a5a5a);border:1px solid #3e3e3e;border-radius:1px"></div>
<svg class="a" style="left:1659.5px;top:524.5px;" width="8" height="5" viewBox="0 0 8 5"><path d="M0 0 H8 L4 4.5Z" fill="#e8e8e8"/></svg>
<div class="t" style="left:1623.50px;top:520.69px;font:normal normal 11px/11px 'Liberation Sans',sans-serif;color:#ececec;transform:scaleX(0.8648);transform-origin:0 0;">100%</div>
<div class="a" style="left:1408px;top:540px;width:263px;height:2px;background:#3d3d3d"></div>
<div class="a" style="left:1408px;top:542px;width:256px;height:466px;background:#4a4a4a"></div>
<div class="a" style="left:1664px;top:542px;width:7px;height:466px;background:#444"></div>
<div class="a" style="left:1408px;top:542px;width:256px;height:23px;background:#535353"></div>
<div class="a" style="left:1408px;top:565px;width:256px;height:1px;background:#3e3e3e"></div>
<div class="a" style="left:1439px;top:543px;width:225px;height:22px;background:#5b6b7e"></div>
<div class="a" style="left:1438px;top:542px;width:1px;height:23px;background:#3e3e3e"></div>
<svg class="a" style="left:1416px;top:549.0px;" width="14" height="9" viewBox="0 0 14 9"><path d="M0.5 4.5 Q7 -2.5 13.5 4.5 Q7 11.5 0.5 4.5Z" fill="#c6c6c6"/><circle cx="7" cy="4.3" r="2.6" fill="#555"/><circle cx="7" cy="4.3" r="1.2" fill="#c6c6c6"/></svg>
<svg class="a" style="left:1444px;top:548.5px;" width="28" height="12" viewBox="0 0 28 12"><path d="M0.5 0.5 L6.5 5 L0.5 9.5Z" fill="#e0e0e0"/><path d="M12 1 H17 L18.5 2.5 H26.5 V11.5 H12Z" fill="#c3ccd6"/></svg>
<div class="t" style="left:1483.80px;top:549.69px;font:normal normal 11px/11px 'Liberation Sans',sans-serif;color:#e6e6e6;transform:scaleX(0.9435);transform-origin:0 0;">text</div>
<div class="a" style="left:1408px;top:566px;width:256px;height:24px;background:#535353"></div>
<div class="a" style="left:1408px;top:590px;width:256px;height:1px;background:#3e3e3e"></div>
<div class="a" style="left:1438px;top:566px;width:1px;height:24px;background:#3e3e3e"></div>
<svg class="a" style="left:1416px;top:573.5px;" width="14" height="9" viewBox="0 0 14 9"><path d="M0.5 4.5 Q7 -2.5 13.5 4.5 Q7 11.5 0.5 4.5Z" fill="#c6c6c6"/><circle cx="7" cy="4.3" r="2.6" fill="#555"/><circle cx="7" cy="4.3" r="1.2" fill="#c6c6c6"/></svg>
<svg class="a" style="left:1442px;top:569.0px;" width="32" height="18" viewBox="0 0 32 18"><rect x="0" y="0" width="32" height="18" fill="#111"/><rect x="1.5" y="1.5" width="29" height="15" fill="#f2f2f2"/><rect x="1.5" y="1.5" width="3.8" height="3.8" fill="#cfcfcf"/><rect x="9.1" y="1.5" width="3.8" height="3.8" fill="#cfcfcf"/><rect x="16.7" y="1.5" width="3.8" height="3.8" fill="#cfcfcf"/><rect x="5.3" y="5.3" width="3.8" height="3.8" fill="#cfcfcf"/><rect x="12.899999999999999" y="5.3" width="3.8" height="3.8" fill="#cfcfcf"/><rect x="20.5" y="5.3" width="3.8" height="3.8" fill="#cfcfcf"/><rect x="1.5" y="9.1" width="3.8" height="3.8" fill="#cfcfcf"/><rect x="9.1" y="9.1" width="3.8" height="3.8" fill="#cfcfcf"/><rect x="16.7" y="9.1" width="3.8" height="3.8" fill="#cfcfcf"/><rect x="5.3" y="12.899999999999999" width="3.8" height="3.8" fill="#cfcfcf"/><rect x="12.899999999999999" y="12.899999999999999" width="3.8" height="3.8" fill="#cfcfcf"/><rect x="20.5" y="12.899999999999999" width="3.8" height="3.8" fill="#cfcfcf"/><rect x="21" y="4" width="11" height="14" fill="#111"/><path d="M23.5 5.5 H27.5 L30.5 8.5 V16.5 H23.5Z" fill="none" stroke="#b8b8b8" stroke-width="1.2"/><rect x="22" y="11" width="5" height="6" fill="#9a9a9a"/></svg>
<div class="t" style="left:1483.80px;top:574.19px;font:normal normal 11px/11px 'Liberation Sans',sans-serif;color:#e6e6e6;transform:scaleX(0.9198);transform-origin:0 0;">Vektor-Smartobjekt</div>
<div class="a" style="left:1408px;top:591px;width:256px;height:24px;background:#535353"></div>
<div class="a" style="left:1408px;top:615px;width:256px;height:1px;background:#3e3e3e"></div>
<div class="a" style="left:1438px;top:591px;width:1px;height:24px;background:#3e3e3e"></div>
<svg class="a" style="left:1416px;top:598.5px;" width="14" height="9" viewBox="0 0 14 9"><path d="M0.5 4.5 Q7 -2.5 13.5 4.5 Q7 11.5 0.5 4.5Z" fill="#c6c6c6"/><circle cx="7" cy="4.3" r="2.6" fill="#555"/><circle cx="7" cy="4.3" r="1.2" fill="#c6c6c6"/></svg>
<svg class="a" style="left:1442px;top:594.0px;" width="32" height="18" viewBox="0 0 32 18"><rect x="0" y="0" width="32" height="18" fill="#111"/><rect x="1.5" y="1.5" width="29" height="15" fill="#f2f2f2"/><rect x="1.5" y="1.5" width="3.8" height="3.8" fill="#cfcfcf"/><rect x="9.1" y="1.5" width="3.8" height="3.8" fill="#cfcfcf"/><rect x="16.7" y="1.5" width="3.8" height="3.8" fill="#cfcfcf"/><rect x="5.3" y="5.3" width="3.8" height="3.8" fill="#cfcfcf"/><rect x="12.899999999999999" y="5.3" width="3.8" height="3.8" fill="#cfcfcf"/><rect x="20.5" y="5.3" width="3.8" height="3.8" fill="#cfcfcf"/><rect x="1.5" y="9.1" width="3.8" height="3.8" fill="#cfcfcf"/><rect x="9.1" y="9.1" width="3.8" height="3.8" fill="#cfcfcf"/><rect x="16.7" y="9.1" width="3.8" height="3.8" fill="#cfcfcf"/><rect x="5.3" y="12.899999999999999" width="3.8" height="3.8" fill="#cfcfcf"/><rect x="12.899999999999999" y="12.899999999999999" width="3.8" height="3.8" fill="#cfcfcf"/><rect x="20.5" y="12.899999999999999" width="3.8" height="3.8" fill="#cfcfcf"/><rect x="1.5" y="6" width="21" height="4" fill="#2b2b2b"/><rect x="21" y="4" width="11" height="14" fill="#111"/><path d="M23.5 5.5 H27.5 L30.5 8.5 V16.5 H23.5Z" fill="none" stroke="#b8b8b8" stroke-width="1.2"/><rect x="22" y="11" width="5" height="6" fill="#9a9a9a"/></svg>
<div class="t" style="left:1483.80px;top:599.19px;font:normal normal 11px/11px 'Liberation Sans',sans-serif;color:#e6e6e6;transform:scaleX(0.9198);transform-origin:0 0;">Vektor-Smartobjekt</div>
<div class="a" style="left:1408px;top:616px;width:256px;height:24px;background:#535353"></div>
<div class="a" style="left:1408px;top:640px;width:256px;height:1px;background:#3e3e3e"></div>
<div class="a" style="left:1438px;top:616px;width:1px;height:24px;background:#3e3e3e"></div>
<svg class="a" style="left:1416px;top:623.5px;" width="14" height="9" viewBox="0 0 14 9"><path d="M0.5 4.5 Q7 -2.5 13.5 4.5 Q7 11.5 0.5 4.5Z" fill="#c6c6c6"/><circle cx="7" cy="4.3" r="2.6" fill="#555"/><circle cx="7" cy="4.3" r="1.2" fill="#c6c6c6"/></svg>
<div class="t" style="left:1452.00px;top:620.27px;font:normal normal 14px/14px 'Liberation Serif',serif;color:#b8b8b8;transform:scaleX(1.1628);transform-origin:0 0;">T</div>
<div class="t" style="left:1483.80px;top:624.19px;font:normal normal 11px/11px 'Liberation Sans',sans-serif;color:#e6e6e6;transform:scaleX(0.9168);transform-origin:0 0;">Mit der Kreativation Designagentur...</div>
<div class="a" style="left:1408px;top:641px;width:256px;height:24px;background:#535353"></div>
<div class="a" style="left:1408px;top:665px;width:256px;height:1px;background:#3e3e3e"></div>
<div class="a" style="left:1438px;top:641px;width:1px;height:24px;background:#3e3e3e"></div>
<svg class="a" style="left:1416px;top:648.5px;" width="14" height="9" viewBox="0 0 14 9"><path d="M0.5 4.5 Q7 -2.5 13.5 4.5 Q7 11.5 0.5 4.5Z" fill="#c6c6c6"/><circle cx="7" cy="4.3" r="2.6" fill="#555"/><circle cx="7" cy="4.3" r="1.2" fill="#c6c6c6"/></svg>
<div class="t" style="left:1452.00px;top:645.27px;font:normal normal 14px/14px 'Liberation Serif',serif;color:#b8b8b8;transform:scaleX(1.1628);transform-origin:0 0;">T</div>
<div class="t" style="left:1483.80px;top:649.19px;font:normal normal 11px/11px 'Liberation Sans',sans-serif;color:#e6e6e6;transform:scaleX(0.9081);transform-origin:0 0;">Als kreative und ideenreiche Desig...</div>
<div class="a" style="left:1408px;top:666px;width:256px;height:22px;background:#535353"></div>
<div class="a" style="left:1408px;top:688px;width:256px;height:1px;background:#3e3e3e"></div>
<div class="a" style="left:1438px;top:666px;width:1px;height:22px;background:#3e3e3e"></div>
<div class="a" style="left:1417px;top:671.0px;width:12px;height:12px;border:1px solid #3c3c3c"></div>
<svg class="a" style="left:1444px;top:672.0px;" width="28" height="12" viewBox="0 0 28 12"><path d="M0.5 0.5 L6.5 5 L0.5 9.5Z" fill="#e0e0e0"/><path d="M12 1 H17 L18.5 2.5 H26.5 V11.5 H12Z" fill="#b4b4b4"/></svg>
<div class="t" style="left:1483.80px;top:673.19px;font:normal normal 11px/11px 'Liberation Sans',sans-serif;color:#e6e6e6;transform:scaleX(0.8922);transform-origin:0 0;">1und4</div>
<div class="a" style="left:1408px;top:689px;width:256px;height:38px;background:#535353"></div>
<div class="a" style="left:1408px;top:727px;width:256px;height:1px;background:#3e3e3e"></div>
<div class="a" style="left:1438px;top:689px;width:1px;height:38px;background:#3e3e3e"></div>
<svg class="a" style="left:1416px;top:703.5px;" width="14" height="9" viewBox="0 0 14 9"><path d="M0.5 4.5 Q7 -2.5 13.5 4.5 Q7 11.5 0.5 4.5Z" fill="#c6c6c6"/><circle cx="7" cy="4.3" r="2.6" fill="#555"/><circle cx="7" cy="4.3" r="1.2" fill="#c6c6c6"/></svg>
<svg class="a" style="left:1442px;top:699.0px;" width="32" height="18" viewBox="0 0 32 18"><rect x="0" y="0" width="32" height="18" fill="#111"/><rect x="1.5" y="1.5" width="29" height="15" fill="#ece8d9"/><rect x="21" y="4" width="11" height="14" fill="#555"/><rect x="23" y="6.5" width="7" height="8" fill="none" stroke="#c8c8c8" stroke-width="0.8"/><circle cx="23" cy="6.5" r="1.2" fill="#c8c8c8"/><circle cx="30" cy="6.5" r="1.2" fill="#c8c8c8"/><circle cx="23" cy="14.5" r="1.2" fill="#c8c8c8"/><circle cx="30" cy="14.5" r="1.2" fill="#c8c8c8"/></svg>
<div class="t" style="left:1483.80px;top:704.19px;font:normal normal 11px/11px 'Liberation Sans',sans-serif;color:#e6e6e6;transform:scaleX(0.9273);transform-origin:0 0;">Rechteck 1</div>
<div class="a" style="left:1408px;top:728px;width:256px;height:24px;background:#535353"></div>
<div class="a" style="left:1408px;top:752px;width:256px;height:1px;background:#3e3e3e"></div>
<div class="a" style="left:1438px;top:728px;width:1px;height:24px;background:#3e3e3e"></div>
<div class="a" style="left:1417px;top:734.0px;width:12px;height:12px;border:1px solid #3c3c3c"></div>
<svg class="a" style="left:1442px;top:731.0px;" width="32" height="18" viewBox="0 0 32 18"><rect x="0" y="0" width="32" height="18" fill="#111"/><rect x="1.5" y="1.5" width="29" height="13" fill="#fbfbfb"/><rect x="1.5" y="15" width="29" height="1.5" fill="#f2f2f2"/></svg>
<div class="t" style="left:1483.80px;top:736.19px;font:normal normal 11px/11px 'Liberation Sans',sans-serif;color:#e6e6e6;transform:scaleX(0.8750);transform-origin:0 0;">Vorlage Vorderseite</div>
<div class="a" style="left:1408px;top:753px;width:256px;height:24px;background:#535353"></div>
<div class="a" style="left:1408px;top:777px;width:256px;height:1px;background:#3e3e3e"></div>
<div class="a" style="left:1438px;top:753px;width:1px;height:24px;background:#3e3e3e"></div>
<div class="a" style="left:1417px;top:759.0px;width:12px;height:12px;border:1px solid #3c3c3c"></div>
<svg class="a" style="left:1442px;top:756.0px;" width="32" height="18" viewBox="0 0 32 18"><rect x="0" y="0" width="32" height="18" fill="#111"/><rect x="1.5" y="1.5" width="29" height="13" fill="#fbfbfb"/><rect x="1.5" y="15" width="29" height="1.5" fill="#f2f2f2"/></svg>
<div class="t" style="left:1483.80px;top:761.19px;font:normal normal 11px/11px 'Liberation Sans',sans-serif;color:#e6e6e6;transform:scaleX(0.8737);transform-origin:0 0;">Vorlage Rückseite</div>
</body></html>
